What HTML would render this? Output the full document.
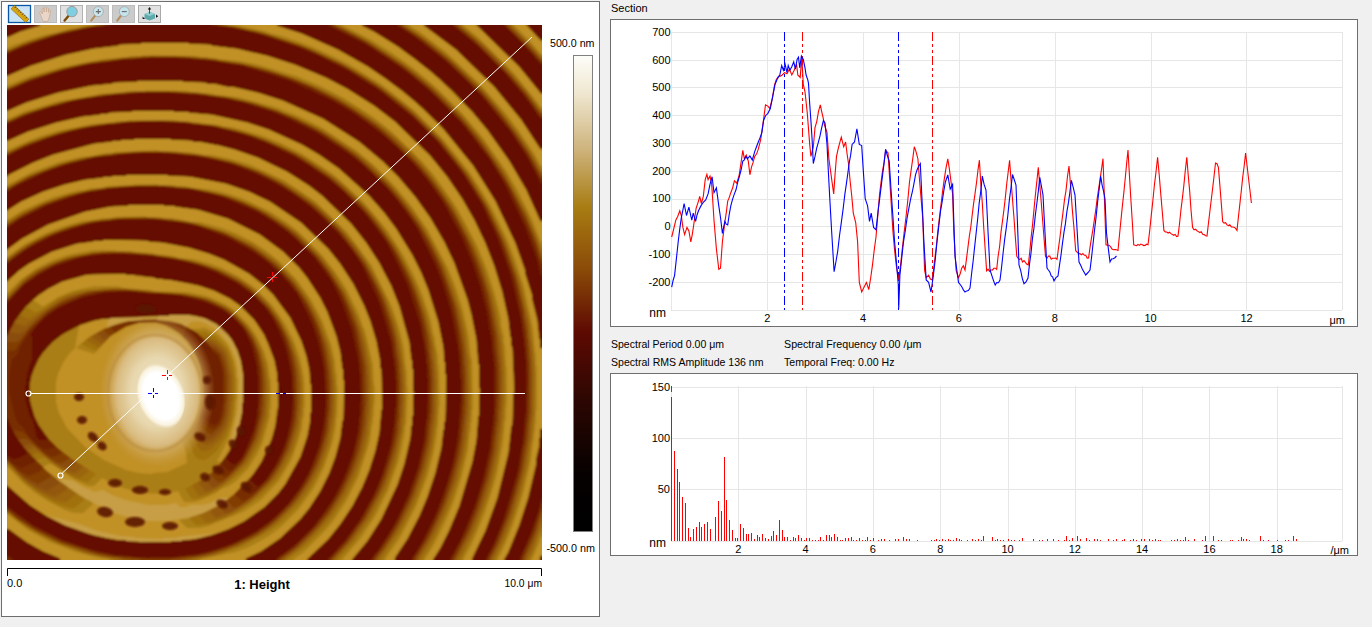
<!DOCTYPE html>
<html><head><meta charset="utf-8"><style>
html,body{margin:0;padding:0;}
body{width:1372px;height:627px;background:#f0f0f0;position:relative;overflow:hidden;font-family:"Liberation Sans", sans-serif;}
svg{position:absolute;left:0;top:0;}
text{font-family:"Liberation Sans", sans-serif;font-size:11px;fill:#000;}
</style></head><body>
<svg width="1372" height="627" viewBox="0 0 1372 627">
<!-- left panel -->
<rect x="1.5" y="1.5" width="598" height="615" fill="#fff" stroke="#6e6e6e" stroke-width="1"/>
<!-- toolbar -->
<g>
<rect x="8.5" y="5.5" width="22" height="17" fill="#cce3f6" stroke="#0a56a6" stroke-width="1.3"/>
<g transform="translate(20 14) rotate(43)">
<rect x="-10" y="-2.3" width="20" height="4.6" fill="#d9a512" stroke="#8a6200" stroke-width="0.6"/>
<path d="M-8 -2.3v1.6M-5.5 -2.3v1.2M-3 -2.3v1.6M-0.5 -2.3v1.2M2 -2.3v1.6M4.5 -2.3v1.2M7 -2.3v1.6" stroke="#3a2a00" stroke-width="0.8"/>
</g>
<rect x="34.5" y="5.5" width="22" height="17" fill="#cbcbcb" stroke="#b9b9b9"/>
<path d="M40 13.5 Q39 12 40.5 11.5 L42.5 14 L42 9 Q42.2 7.6 43.4 8 L44.2 12 L44.4 7.2 Q45 6.2 46 7 L46.4 12 L47 8 Q47.8 7.2 48.6 8 L48.4 12.6 L49.4 10.2 Q50.4 9.8 50.6 10.8 L49.6 16 Q48.8 19.5 47.6 21.5 L43.2 21.5 Q41.6 18.4 40 13.5Z" fill="#ead6c8" stroke="#c9a88e" stroke-width="0.7"/>
<rect x="60.5" y="5.5" width="22" height="17" fill="#e1e1e1" stroke="#b2b2b2"/>
<path d="M68.6 15.8 L64.6 20.6" stroke="#7a4a08" stroke-width="2.4" stroke-linecap="round"/>
<circle cx="72" cy="11.6" r="5.2" fill="#7fcfe2" stroke="#9c9c9c" stroke-width="1"/>
<rect x="86.5" y="5.5" width="22" height="17" fill="#cbcbcb" stroke="#bdbdbd"/>
<path d="M95 15.8 L91.2 20.6" stroke="#b39163" stroke-width="2.2" stroke-linecap="round"/>
<circle cx="98.3" cy="11.6" r="5" fill="#c9e7ee" stroke="#a9a9a9" stroke-width="0.9"/>
<path d="M95.8 11.6h5M98.3 9.1v5" stroke="#6a6a6a" stroke-width="1.1"/>
<rect x="112.5" y="5.5" width="22" height="17" fill="#cbcbcb" stroke="#bdbdbd"/>
<path d="M121 15.8 L117.2 20.6" stroke="#b39163" stroke-width="2.2" stroke-linecap="round"/>
<circle cx="124.3" cy="11.6" r="5" fill="#c3e4ec" stroke="#a9a9a9" stroke-width="0.9"/>
<path d="M121.8 11.6h5" stroke="#6a6a6a" stroke-width="1.1"/>
<rect x="138.5" y="5.5" width="22" height="17" fill="#e1e1e1" stroke="#a9a9a9"/>
<path d="M144.5 14 L150 12 L155 14 L155 18.5 L149.5 20.5 L144.5 18.5Z" fill="#5fa9ab"/>
<path d="M144.5 14 L150 12 L155 14 L149.5 16Z" fill="#8fcfd0"/>
<path d="M149.5 13.5V8.5" stroke="#222" stroke-width="0.8"/>
<path d="M147.8 9.6 L149.5 7 L151.2 9.6Z" fill="#111"/>
<path d="M156 14.6 L158.2 16.2 L156 17.8Z" fill="#111"/>
<path d="M142.6 16.4 L142.6 19 L145 19Z" fill="#111"/>
</g>
<!-- AFM image -->
<svg x="7" y="25" width="535" height="535" viewBox="7 25 535 535" overflow="hidden">
<defs><filter id="afmblur" x="-2%" y="-2%" width="104%" height="104%"><feGaussianBlur stdDeviation="0.9"/></filter></defs><g filter="url(#afmblur)">
<rect x="5" y="23" width="539" height="539" fill="#5a0b00"/>
<path fill="#651100" fill-rule="evenodd" d="M4 22l0 540 540 0 0 -540z"/>
<path fill="#6f2002" fill-rule="evenodd" d="M4 555l0 7 9 0 0 -3 -6 -4zM544 499l-3 0 -2 10 -10 29 -9 20 0 4 19 0 1 -6 4 -1zM4 282l0 21 3 0 17 -18 14 -10 17 -9 24 -8 16 -3 16 -1 1 -1 14 0 1 1 13 0 1 1 16 1 31 6 27 10 20 10 17 12 11 11 9 12 10 21 5 15 5 25 0 13 1 1 -1 22 -5 24 -5 14 -7 14 -10 15 -7 6 -9 -8 12 -17 11 -25 6 -30 0 -24 -1 -1 -2 -18 -5 -16 -6 -13 -10 -15 -14 -14 -10 -7 -16 -8 -15 -5 -18 -4 -25 -3 -14 -3 -16 -1 -1 -1 -38 1 -25 7 -14 7 -15 11 -13 14 -8 12 -4 9 -4 1 0 82 4 1 0 2 8 15 12 16 -1 2 -11 5 -3 0 -6 -4 -3 0 0 30 3 0 23 20 17 11 18 9 29 10 25 5 7 0 1 1 43 1 1 -1 10 0 1 -1 12 -1 17 -4 17 -6 16 -8 20 -14 14 -14 7 -9 15 -27 7 -21 3 -16 0 -7 1 -1 0 -27 -1 -1 -1 -14 -3 -14 -5 -15 -11 -23 -17 -23 -9 -9 -15 -12 -25 -14 -15 -6 -20 -6 -26 -5 -14 -1 -1 -1 -44 -1 -1 1 -9 0 -1 1 -16 2 -25 8 -23 12 -10 7 -12 11zM31 334l5 -7 10 -10 11 -8 16 -8 12 -4 19 -4 26 -2 1 1 14 0 1 1 33 2 32 9 12 6 6 4 13 13 4 6 6 14 5 20 0 7 1 1 0 33 -1 1 0 6 -3 14 -10 25 -3 5 -6 6 -4 -2 -6 -6 9 -16 6 -19 1 -10 1 -1 0 -8 1 -1 0 -27 -3 -16 -7 -17 -5 -7 -12 -11 -13 -6 -15 -3 -18 0 -1 1 -30 1 -1 1 -26 0 -1 1 -7 0 -10 2 -13 4 -19 10 -14 12 -9 12 -5 10 -4 16 0 14 3 13 6 13 10 13 -1 2 -8 0 -3 -2 -4 -17 -3 -5 -4 -14 -1 -16 1 -1 1 -11 5 -15 0 -21zM4 250l0 14 3 0 8 -7 15 -10 22 -11 29 -10 22 -5 15 -1 1 -1 36 0 1 1 10 0 1 1 13 1 18 4 30 12 24 13 18 13 10 9 18 22 14 29 7 21 5 24 1 22 1 1 -1 25 -5 26 -9 25 -11 20 -13 17 -19 18 -16 11 -20 10 -17 6 -16 4 -19 2 -1 1 -32 1 -1 -1 -15 0 -1 -1 -15 -1 -27 -6 -28 -10 -27 -14 -26 -19 -3 0 0 22 5 1 18 13 16 9 17 7 1 4 184 0 1 -4 15 -7 19 -13 20 -19 9 -11 11 -17 9 -18 6 -16 5 -19 2 -17 1 -1 1 -39 -1 -1 0 -10 -1 -1 -2 -17 -4 -16 -9 -24 -7 -14 -13 -20 -8 -10 -16 -16 -23 -17 -32 -16 -30 -9 -23 -3 -1 -1 -10 0 -1 -1 -34 0 -1 1 -18 1 -25 5 -37 13 -26 14 -15 11zM4 211l0 17 3 0 15 -10 24 -12 28 -10 23 -6 22 -2 1 -1 16 0 1 -1 20 0 1 1 15 0 1 1 16 1 16 3 16 5 33 14 14 8 20 14 25 24 18 25 10 21 10 28 7 33 2 37 -1 1 0 14 -1 1 -1 14 -5 22 -7 20 -10 21 -12 19 -12 15 -16 16 -20 15 0 3 31 0 0 -3 21 -20 12 -15 12 -18 10 -19 7 -17 6 -19 4 -18 2 -23 1 -1 -1 -40 -1 -1 0 -6 -4 -21 -6 -20 -6 -15 -11 -22 -13 -20 -12 -15 -27 -26 -31 -21 -21 -10 -23 -8 -36 -7 -22 -1 -1 -1 -40 0 -1 1 -13 0 -1 1 -8 0 -1 1 -18 2 -21 5 -21 7 -22 10 -14 9zM4 177l0 15 3 0 9 -6 30 -14 23 -8 28 -7 21 -2 1 -1 11 0 1 -1 40 0 1 1 11 0 1 1 20 2 14 3 21 7 24 10 17 9 16 10 16 12 28 27 14 18 9 14 16 35 12 40 2 16 1 1 0 7 1 1 0 12 1 1 0 27 -1 1 -1 19 -1 1 -2 16 -9 31 -7 17 -14 26 -18 25 -15 16 0 3 24 0 0 -3 15 -18 14 -22 16 -34 7 -21 6 -26 1 -12 1 -1 0 -9 1 -1 0 -21 1 -1 -1 -1 0 -22 -1 -1 0 -8 -1 -1 -2 -18 -10 -36 -8 -20 -12 -23 -13 -20 -15 -19 -29 -28 -13 -10 -22 -14 -29 -14 -23 -8 -15 -4 -21 -4 -6 0 -1 -1 -21 -1 -1 -1 -35 0 -1 1 -12 0 -1 1 -8 0 -1 1 -18 2 -41 11 -20 8 -24 12 -2 2zM4 141l0 15 4 0 9 -5 29 -12 29 -9 19 -4 21 -2 1 -1 10 0 1 -1 52 0 1 1 10 0 1 1 20 2 18 4 19 6 23 9 24 12 15 9 21 15 13 11 17 17 11 13 15 21 20 41 13 40 5 25 1 15 1 1 0 13 1 1 -1 40 -1 1 -2 21 -6 26 -10 29 -14 29 -15 24 -8 10 0 3 23 0 1 -5 12 -18 12 -23 8 -19 8 -24 6 -25 2 -18 1 -1 0 -7 1 -1 1 -46 -1 -1 0 -11 -1 -1 -1 -15 -5 -25 -10 -32 -7 -17 -9 -18 -16 -26 -12 -16 -15 -17 -30 -27 -20 -14 -17 -10 -33 -15 -21 -7 -36 -8 -23 -2 -1 -1 -14 0 -1 -1 -40 0 -1 1 -23 1 -1 1 -7 0 -1 1 -18 2 -26 6 -28 9 -20 9zM4 111l0 13 3 0 23 -10 24 -8 3 0 15 -5 21 -4 13 -1 1 -1 19 -1 1 -1 19 0 1 -1 21 0 1 1 18 0 1 1 10 0 1 1 21 2 22 5 28 9 22 9 22 11 38 25 19 16 14 14 16 19 16 23 17 34 8 20 9 29 8 42 1 25 1 1 0 24 -1 1 -1 24 -1 1 -1 13 -4 20 -6 22 -12 32 -14 28 -9 14 0 4 21 0 0 -3 7 -11 9 -18 10 -24 13 -44 4 -21 2 -25 1 -1 0 -22 1 -1 -1 -5 0 -22 -1 -1 -2 -25 -5 -25 -4 -15 -13 -36 -10 -21 -14 -24 -15 -21 -17 -20 -15 -15 -24 -20 -36 -23 -40 -18 -25 -8 -26 -6 -5 0 -13 -3 -7 0 -1 -1 -23 -1 -1 -1 -44 0 -1 1 -24 1 -1 1 -21 2 -33 7 -32 10 -18 8zM4 76l0 15 4 0 20 -9 35 -12 32 -7 19 -2 1 -1 20 -1 1 -1 54 0 1 1 19 1 1 1 6 0 1 1 6 0 16 3 50 16 43 20 17 10 27 19 19 16 15 15 17 20 15 21 19 36 10 24 8 24 7 27 3 21 1 1 2 26 1 1 0 52 -1 1 0 10 -1 1 -2 21 -7 32 -8 26 -13 32 -12 22 0 3 22 0 0 -4 13 -27 12 -33 11 -45 3 -27 1 -1 1 -32 1 -1 -2 -45 -1 -1 0 -8 -1 -1 -2 -18 -6 -27 -8 -26 -9 -23 -11 -23 -12 -21 -15 -22 -17 -21 -35 -34 -21 -16 -27 -17 -21 -11 -31 -13 -28 -9 -30 -7 -25 -3 -1 -1 -22 -1 -1 -1 -46 0 -1 1 -22 1 -1 1 -25 3 -27 6 -35 11 -23 10zM503 22l0 3 18 17 19 22 4 1 0 -24 -3 0 -15 -16 0 -3zM452 22l0 3 19 15 31 30 27 32 11 16 4 1 0 -25 -3 0 -22 -27 -43 -42 0 -3zM396 22l0 3 16 10 29 22 16 14 22 22 31 38 19 29 12 24 3 0 0 -34 -4 -1 -19 -29 -27 -33 -38 -37 -32 -24 -1 -4zM327 22l0 3 38 19 31 20 16 12 19 16 34 35 23 30 14 22 23 48 12 33 4 16 3 0 0 -54 -4 -1 -14 -31 -17 -29 -13 -19 -18 -23 -19 -21 -28 -26 -33 -25 -24 -15 -12 -6 -1 -4zM211 22l0 3 13 1 25 5 46 15 24 10 26 13 31 19 30 23 30 29 25 31 20 32 16 34 13 36 11 46 2 19 1 1 0 8 1 1 0 11 1 1 0 53 -1 1 -2 28 -6 32 -14 47 -8 20 -9 18 0 3 18 0 0 -3 4 -7 11 -27 9 -28 8 -34 0 -5 3 -13 0 -7 1 -1 0 -8 4 -1 0 -79 -4 -1 0 -8 -1 -1 -2 -19 -5 -20 0 -4 -7 -22 0 -3 -10 -28 -20 -42 -22 -35 -30 -37 -20 -20 -21 -18 -34 -24 -30 -17 -36 -16 -25 -8 -1 -4zM4 54l6 -1 5 -3 35 -13 42 -10 19 -2 0 -3 -70 0 -1 4 -20 6 -11 5 -5 0z"/>
<path fill="#782f04" fill-rule="evenodd" d="M4 557l0 5 6 0 0 -3 -3 -2zM544 504l-3 0 0 3 -8 24 -11 25 -1 6 18 0 1 -6 4 -1zM4 282l0 20 3 0 17 -18 14 -10 17 -9 27 -9 20 -2 1 -1 29 0 1 1 26 2 35 7 18 6 25 13 15 11 13 13 9 12 9 17 5 14 5 24 1 36 -1 1 0 8 -2 10 -6 20 -8 17 -10 15 -12 12 -5 2 -8 -8 11 -12 8 -12 6 -12 7 -20 3 -15 0 -7 1 -1 0 -24 -1 -1 0 -7 -3 -15 -6 -17 -14 -23 -18 -17 -22 -12 -23 -7 -21 -3 -1 -1 -6 0 -1 -1 -6 0 -1 -1 -20 -2 -1 -1 -8 0 -1 -1 -30 0 -25 5 -22 10 -9 6 -14 13 -10 13 -7 14 -4 1 0 82 4 1 4 10 8 13 16 18 -1 2 -14 6 -11 -6 -3 -4 -3 0 0 27 3 0 23 20 17 11 18 9 29 10 25 5 7 0 1 1 43 1 1 -1 10 0 1 -1 12 -1 17 -4 17 -6 16 -8 20 -14 14 -14 7 -9 15 -27 7 -21 3 -16 0 -7 1 -1 0 -27 -1 -1 -1 -14 -3 -14 -5 -15 -11 -23 -17 -23 -9 -9 -15 -12 -25 -14 -15 -6 -20 -6 -26 -5 -14 -1 -1 -1 -44 -1 -1 1 -9 0 -1 1 -16 2 -25 8 -23 12 -10 7 -12 11zM188 327l9 5 12 12 5 9 4 3 3 9 2 10 0 28 -3 16 -4 6 -2 0 -16 -9 4 -17 0 -20 -5 -20 -5 -10 -9 -11 0 -2zM12 360l5 -5 6 -13 6 -9 16 -17 13 -9 25 -11 23 -5 30 0 1 1 37 2 1 1 7 0 19 4 22 10 11 8 10 11 9 16 4 12 1 10 1 1 0 9 1 1 0 26 -1 1 0 8 -4 19 -4 11 -8 16 -12 13 -2 0 -9 -8 9 -12 9 -21 4 -19 0 -8 1 -1 0 -27 -3 -16 -3 -9 -6 -11 -11 -12 -17 -9 -15 -3 -18 0 -1 1 -10 0 -1 1 -54 2 -14 3 -16 6 -9 5 -12 9 -14 17 -5 10 -4 16 0 14 5 18 10 17 11 12 -7 3 -5 0 -6 -3 -8 -8 -7 -11 -5 -4 -3 -7 -6 -24 0 -17zM4 250l0 13 3 0 17 -13 28 -15 25 -9 17 -4 21 -2 1 -1 43 0 1 1 16 1 24 5 26 9 24 13 18 13 20 19 10 13 14 25 8 22 4 18 1 12 1 1 0 9 1 1 0 30 -1 1 -1 15 -5 21 -11 27 -7 12 -11 15 -19 19 -15 11 -23 12 -27 9 -15 3 -6 0 -1 1 -8 0 -1 1 -42 0 -1 -1 -9 0 -1 -1 -6 0 -21 -4 -34 -11 -28 -14 -27 -19 -3 0 0 20 5 1 18 13 16 9 17 7 1 4 184 0 1 -4 15 -7 19 -13 20 -19 9 -11 11 -17 9 -18 6 -16 5 -19 2 -17 1 -1 1 -39 -1 -1 0 -10 -1 -1 -2 -17 -4 -16 -9 -24 -7 -14 -13 -20 -8 -10 -16 -16 -23 -17 -32 -16 -30 -9 -23 -3 -1 -1 -10 0 -1 -1 -34 0 -1 1 -18 1 -25 5 -37 13 -26 14 -15 11zM4 211l0 16 3 0 13 -9 23 -12 27 -10 20 -5 5 0 13 -3 8 0 1 -1 13 0 1 -1 32 0 1 1 12 0 1 1 15 1 34 8 16 6 16 8 22 14 13 10 24 24 10 13 10 16 8 16 9 25 5 22 2 22 1 1 0 39 -1 1 -1 15 -6 26 -9 24 -11 21 -18 25 -22 22 -17 12 0 3 30 0 0 -3 21 -20 12 -15 12 -18 10 -19 7 -17 6 -19 4 -18 2 -23 1 -1 -1 -40 -1 -1 0 -6 -4 -21 -6 -20 -6 -15 -11 -22 -13 -20 -12 -15 -27 -26 -31 -21 -21 -10 -23 -8 -36 -7 -22 -1 -1 -1 -40 0 -1 1 -13 0 -1 1 -8 0 -1 1 -18 2 -21 5 -21 7 -22 10 -14 9zM4 177l0 14 3 0 7 -5 31 -15 24 -8 26 -6 20 -2 1 -1 9 0 1 -1 49 0 1 1 18 1 37 8 25 9 30 16 24 17 25 23 19 23 11 17 11 21 12 33 5 21 2 18 1 1 0 9 1 1 0 42 -1 1 0 8 -1 1 0 6 -3 16 -9 30 -9 21 -13 23 -16 22 -16 17 0 3 23 0 0 -3 15 -18 14 -22 16 -34 7 -21 6 -26 1 -12 1 -1 0 -9 1 -1 0 -21 1 -1 -1 -1 0 -22 -1 -1 0 -8 -1 -1 -2 -18 -10 -36 -8 -20 -12 -23 -13 -20 -15 -19 -29 -28 -13 -10 -22 -14 -29 -14 -23 -8 -15 -4 -21 -4 -6 0 -1 -1 -21 -1 -1 -1 -35 0 -1 1 -12 0 -1 1 -8 0 -1 1 -18 2 -41 11 -20 8 -24 12 -2 2zM4 141l0 14 4 0 17 -9 30 -11 27 -7 23 -3 1 -1 17 -1 1 -1 17 0 1 -1 22 0 1 1 27 1 1 1 7 0 1 1 17 2 5 2 12 2 25 8 19 8 22 12 29 20 13 11 21 21 23 30 9 15 13 27 8 22 5 19 4 26 1 1 1 18 1 1 0 43 -1 1 -2 24 -6 27 -11 32 -13 27 -15 24 -8 10 0 4 21 0 1 -5 12 -18 12 -23 8 -19 8 -24 6 -25 2 -18 1 -1 0 -7 1 -1 1 -46 -1 -1 0 -11 -1 -1 -1 -15 -5 -25 -10 -32 -7 -17 -9 -18 -16 -26 -12 -16 -15 -17 -30 -27 -20 -14 -17 -10 -33 -15 -21 -7 -36 -8 -23 -2 -1 -1 -14 0 -1 -1 -40 0 -1 1 -23 1 -1 1 -7 0 -1 1 -18 2 -26 6 -28 9 -20 9zM4 111l0 12 3 0 20 -9 28 -9 25 -6 24 -3 1 -1 7 0 1 -1 25 -1 1 -1 36 0 1 1 24 1 1 1 7 0 1 1 23 3 24 6 21 7 43 21 23 15 18 14 29 28 17 21 12 18 20 39 11 31 8 35 2 21 1 1 1 57 -1 1 -2 25 -5 25 -10 33 -9 22 -11 22 -11 18 0 3 20 0 0 -3 7 -11 9 -18 10 -24 13 -44 4 -21 2 -25 1 -1 0 -22 1 -1 -1 -5 0 -22 -1 -1 -2 -25 -5 -25 -4 -15 -13 -36 -10 -21 -14 -24 -15 -21 -17 -20 -15 -15 -24 -20 -36 -23 -40 -18 -25 -8 -26 -6 -5 0 -13 -3 -7 0 -1 -1 -23 -1 -1 -1 -44 0 -1 1 -24 1 -1 1 -21 2 -33 7 -32 10 -18 8zM4 76l0 14 3 0 26 -11 25 -8 35 -8 27 -3 1 -1 27 -1 1 -1 28 0 1 1 27 1 1 1 7 0 1 1 6 0 1 1 21 3 27 7 36 13 38 20 17 11 25 19 32 31 11 13 19 27 18 33 10 24 7 21 6 24 4 21 0 6 1 1 1 16 1 1 0 13 1 1 0 40 -1 1 0 12 -1 1 0 9 -1 1 -2 19 -7 31 -9 28 -14 33 -9 16 0 4 20 0 0 -4 13 -27 12 -33 11 -45 3 -27 1 -1 1 -32 1 -1 -2 -45 -1 -1 0 -8 -1 -1 -2 -18 -6 -27 -8 -26 -9 -23 -11 -23 -12 -21 -15 -22 -17 -21 -35 -34 -21 -16 -27 -17 -21 -11 -31 -13 -28 -9 -30 -7 -25 -3 -1 -1 -22 -1 -1 -1 -46 0 -1 1 -22 1 -1 1 -25 3 -27 6 -35 11 -23 10zM505 22l0 3 22 22 14 16 3 0 0 -22 -3 0 -15 -16 0 -3zM454 22l0 3 25 21 26 26 19 22 17 24 3 0 0 -24 -3 0 -22 -27 -43 -42 0 -3zM398 22l0 3 16 10 32 25 37 36 29 36 14 21 15 27 3 0 0 -30 -4 -1 -19 -29 -27 -33 -38 -37 -32 -24 -1 -4zM331 22l0 3 35 18 40 27 23 19 33 33 28 36 18 29 21 44 11 31 1 6 3 0 0 -46 -4 -1 -14 -31 -17 -29 -22 -31 -15 -18 -20 -21 -21 -19 -33 -25 -24 -15 -12 -6 -1 -4zM213 22l0 3 13 1 40 9 43 15 35 17 35 22 35 28 24 24 29 37 17 28 15 31 15 43 10 48 2 25 1 1 0 16 1 1 -1 47 -1 1 -2 25 -1 1 -4 26 -14 48 -11 27 -7 13 0 3 17 0 0 -3 4 -7 11 -27 9 -28 8 -34 0 -5 3 -13 0 -7 1 -1 0 -8 4 -1 0 -79 -4 -1 0 -8 -1 -1 -2 -19 -5 -20 0 -4 -7 -22 0 -3 -10 -28 -20 -42 -22 -35 -30 -37 -20 -20 -21 -18 -34 -24 -30 -17 -36 -16 -25 -8 -1 -4zM4 53l3 0 5 -3 18 -6 3 -2 30 -9 33 -7 13 -1 0 -3 -68 0 -1 4 -20 6 -11 5 -5 0z"/>
<path fill="#823e06" fill-rule="evenodd" d="M544 509l-3 0 -7 23 -12 27 0 3 17 0 1 -6 4 -1zM4 282l0 18 3 0 17 -17 19 -13 17 -8 12 -4 19 -4 7 0 1 -1 47 1 1 1 7 0 1 1 18 2 29 7 16 6 19 10 14 10 17 17 12 18 6 13 5 15 3 15 0 6 1 1 0 13 1 1 -1 24 -4 20 -5 15 -6 13 -11 17 -16 16 -8 6 -3 0 -8 -7 16 -16 11 -16 11 -25 6 -30 0 -24 -1 -1 0 -7 -3 -15 -6 -17 -14 -23 -14 -14 -10 -7 -16 -8 -15 -5 -18 -4 -25 -3 -14 -3 -16 -1 -1 -1 -38 1 -25 7 -23 13 -14 13 -10 13 -7 14 -4 1 0 15 11 -1 15 -21 18 -17 11 -7 23 -10 19 -4 25 -1 1 1 14 0 1 1 35 2 26 5 20 9 11 8 12 13 7 12 5 14 3 15 1 27 -1 1 -1 18 -6 22 -8 17 -7 10 -13 12 -2 0 -8 -9 10 -12 8 -15 6 -19 1 -10 1 -1 0 -8 1 -1 0 -27 -1 -1 -1 -11 -4 -13 -9 -15 -12 -11 -13 -6 -15 -3 -18 0 -1 1 -30 1 -1 1 -26 0 -1 1 -7 0 -10 2 -13 4 -16 8 -17 14 -9 12 -5 10 -4 16 0 14 5 18 10 17 18 18 -4 3 -7 2 -8 -4 -21 -21 -10 -2 3 6 11 15 17 17 -5 4 -10 4 -12 -6 -10 -11 -3 0 0 26 3 0 23 20 17 11 18 9 29 10 25 5 7 0 1 1 43 1 1 -1 10 0 1 -1 12 -1 17 -4 17 -6 16 -8 20 -14 14 -14 7 -9 15 -27 7 -21 3 -16 0 -7 1 -1 0 -27 -1 -1 -1 -14 -3 -14 -5 -15 -11 -23 -17 -23 -9 -9 -15 -12 -25 -14 -15 -6 -20 -6 -26 -5 -14 -1 -1 -1 -44 -1 -1 1 -9 0 -1 1 -16 2 -25 8 -23 12 -10 7 -12 11zM113 325l20 -5 24 -1 1 1 8 0 13 3 18 9 12 12 2 4 8 6 5 15 1 33 -1 1 0 7 -2 9 -3 6 -6 5 -16 -11 5 -20 0 -20 -1 -1 -1 -10 -8 -19 -5 -7 -8 -8 -13 -8 -10 -3 -21 1 -9 3 -10 6 -5 -5zM4 250l0 12 3 0 22 -16 17 -9 17 -7 29 -8 19 -2 1 -1 12 0 1 -1 24 0 1 1 13 0 1 1 14 1 27 6 20 7 15 7 21 13 10 8 21 21 15 22 7 14 6 16 7 31 1 23 1 1 -1 26 -1 1 0 7 -3 15 -8 24 -12 23 -15 20 -12 12 -20 15 -21 11 -26 9 -20 4 -16 1 -1 1 -35 0 -1 -1 -19 -1 -21 -4 -35 -11 -27 -13 -16 -10 -12 -10 -3 0 0 19 5 1 18 13 16 9 17 7 1 4 184 0 1 -4 15 -7 19 -13 20 -19 9 -11 11 -17 9 -18 6 -16 5 -19 2 -17 1 -1 1 -39 -1 -1 0 -10 -1 -1 -2 -17 -4 -16 -9 -24 -7 -14 -13 -20 -8 -10 -16 -16 -23 -17 -32 -16 -30 -9 -23 -3 -1 -1 -10 0 -1 -1 -34 0 -1 1 -18 1 -25 5 -37 13 -26 14 -15 11zM4 211l0 15 3 0 13 -9 26 -13 38 -12 21 -3 1 -1 19 -1 1 -1 41 0 1 1 19 1 37 8 32 13 14 8 17 12 27 25 13 16 12 19 8 16 9 25 7 36 1 44 -1 1 0 9 -1 1 -1 12 -6 24 -8 21 -8 16 -10 16 -16 20 -20 19 -14 10 0 3 28 0 0 -3 21 -20 12 -15 12 -18 10 -19 7 -17 6 -19 4 -18 2 -23 1 -1 -1 -40 -1 -1 0 -6 -4 -21 -6 -20 -6 -15 -11 -22 -13 -20 -12 -15 -27 -26 -31 -21 -21 -10 -23 -8 -36 -7 -22 -1 -1 -1 -40 0 -1 1 -13 0 -1 1 -8 0 -1 1 -18 2 -21 5 -21 7 -22 10 -14 9zM4 177l0 13 3 0 11 -7 26 -12 17 -6 32 -8 19 -2 1 -1 9 0 1 -1 14 0 1 -1 26 0 1 1 14 0 1 1 16 1 1 1 16 2 23 6 19 7 19 9 17 10 18 13 13 11 18 18 24 32 12 22 8 19 10 35 2 17 1 1 0 7 1 1 0 13 1 1 0 26 -1 1 0 11 -1 1 -1 14 -6 26 -11 30 -16 30 -15 21 -17 19 0 3 21 0 0 -3 15 -18 14 -22 16 -34 7 -21 6 -26 1 -12 1 -1 0 -9 1 -1 0 -21 1 -1 -1 -1 0 -22 -1 -1 0 -8 -1 -1 -2 -18 -10 -36 -8 -20 -12 -23 -13 -20 -15 -19 -29 -28 -13 -10 -22 -14 -29 -14 -23 -8 -15 -4 -21 -4 -6 0 -1 -1 -21 -1 -1 -1 -35 0 -1 1 -12 0 -1 1 -8 0 -1 1 -18 2 -41 11 -20 8 -24 12 -2 2zM4 141l0 13 4 0 16 -8 33 -12 24 -6 16 -3 6 0 1 -1 16 -1 1 -1 14 0 1 -1 34 0 1 1 14 0 1 1 8 0 1 1 19 2 26 6 21 7 33 15 35 23 12 10 26 26 13 16 12 18 18 35 9 25 6 23 3 23 1 1 0 8 1 1 0 13 1 1 -1 42 -1 1 -2 20 -7 30 -8 23 -12 26 -11 19 -15 21 0 3 20 0 1 -5 12 -18 12 -23 8 -19 8 -24 6 -25 2 -18 1 -1 0 -7 1 -1 1 -46 -1 -1 0 -11 -1 -1 -1 -15 -5 -25 -10 -32 -7 -17 -9 -18 -16 -26 -12 -16 -15 -17 -30 -27 -20 -14 -17 -10 -33 -15 -21 -7 -36 -8 -23 -2 -1 -1 -14 0 -1 -1 -40 0 -1 1 -23 1 -1 1 -7 0 -1 1 -18 2 -26 6 -28 9 -20 9zM4 111l0 11 4 0 18 -8 21 -7 27 -7 21 -3 1 -1 6 0 1 -1 30 -2 1 -1 46 0 1 1 30 2 1 1 26 4 40 12 17 7 27 14 20 13 17 13 34 33 23 30 12 20 9 18 9 22 7 22 5 21 3 24 1 1 1 24 1 1 0 30 -1 1 0 13 -1 1 -1 16 -5 26 -12 39 -8 19 -10 20 -12 19 0 3 19 0 0 -3 7 -11 9 -18 10 -24 13 -44 4 -21 2 -25 1 -1 0 -22 1 -1 -1 -5 0 -22 -1 -1 -2 -25 -5 -25 -4 -15 -13 -36 -10 -21 -14 -24 -15 -21 -17 -20 -15 -15 -24 -20 -36 -23 -40 -18 -25 -8 -26 -6 -5 0 -13 -3 -7 0 -1 -1 -23 -1 -1 -1 -44 0 -1 1 -24 1 -1 1 -21 2 -33 7 -32 10 -18 8zM4 76l0 13 5 0 20 -9 35 -11 27 -6 18 -2 1 -1 7 0 1 -1 23 -1 1 -1 42 0 1 1 13 0 1 1 17 1 1 1 27 4 42 12 27 11 20 10 17 10 27 19 36 33 14 16 15 20 12 19 13 25 16 42 7 27 3 21 1 1 2 25 1 1 1 40 -1 1 -1 28 -1 1 0 7 -1 1 -2 18 -6 26 -11 34 -7 17 -15 29 0 3 19 0 0 -4 13 -27 12 -33 11 -45 3 -27 1 -1 1 -32 1 -1 -2 -45 -1 -1 0 -8 -1 -1 -2 -18 -6 -27 -8 -26 -9 -23 -11 -23 -12 -21 -15 -22 -17 -21 -35 -34 -21 -16 -27 -17 -21 -11 -31 -13 -28 -9 -30 -7 -25 -3 -1 -1 -22 -1 -1 -1 -46 0 -1 1 -22 1 -1 1 -25 3 -27 6 -35 11 -23 10zM506 22l0 3 26 26 8 10 4 1 0 -21 -3 0 -15 -16 0 -3zM455 22l0 3 21 17 33 33 17 20 15 21 3 0 0 -22 -3 0 -22 -27 -43 -42 0 -3zM400 22l0 3 24 16 28 23 34 34 28 35 14 21 13 24 3 0 0 -28 -4 -1 -19 -29 -27 -33 -38 -37 -32 -24 -1 -4zM332 22l0 3 34 17 39 26 33 28 27 28 27 35 19 31 16 33 9 23 5 17 3 0 0 -41 -4 -1 -14 -31 -17 -29 -22 -31 -15 -18 -20 -21 -21 -19 -33 -25 -24 -15 -12 -6 -1 -4zM216 22l0 3 17 2 27 6 35 11 20 8 34 17 33 21 31 25 26 26 22 27 23 36 17 35 14 40 8 34 2 18 1 1 0 7 1 1 1 22 1 1 -1 59 -1 1 -1 16 -1 1 0 6 -1 1 -3 21 -6 24 -8 25 -10 25 -8 16 0 4 15 0 0 -3 4 -7 11 -27 9 -28 8 -34 0 -5 3 -13 0 -7 1 -1 0 -8 4 -1 0 -79 -4 -1 0 -8 -1 -1 -2 -19 -5 -20 0 -4 -7 -22 0 -3 -10 -28 -20 -42 -22 -35 -30 -37 -20 -20 -21 -18 -34 -24 -30 -17 -36 -16 -25 -8 -1 -4zM4 52l4 0 21 -9 29 -9 36 -8 12 -1 0 -3 -65 0 -1 4 -20 6 -11 5 -5 0z"/>
<path fill="#8b4d08" fill-rule="evenodd" d="M544 513l-3 0 -6 20 -11 25 0 4 15 0 1 -6 4 -1zM4 510l0 18 5 1 18 13 16 9 17 7 1 4 80 0 0 -3 -21 -1 -1 -1 -6 0 -15 -3 -36 -11 -27 -13 -17 -11 -11 -9zM4 282l0 18 3 0 17 -18 16 -11 16 -8 11 -4 29 -6 11 0 1 -1 31 1 1 1 8 0 1 1 7 0 1 1 18 2 25 6 17 6 23 12 11 8 18 18 9 13 8 15 6 17 4 19 1 38 -1 1 0 7 -2 10 -7 22 -8 16 -11 16 -17 16 -12 8 -5 2 -8 -8 7 -5 17 -17 11 -16 11 -25 6 -30 0 -24 -1 -1 0 -7 -3 -15 -6 -17 -14 -23 -14 -14 -10 -7 -16 -8 -15 -5 -18 -4 -25 -3 -14 -3 -16 -1 -1 -1 -38 1 -25 7 -23 13 -14 13 -10 13 -7 14 -4 1 0 6 12 0 4 -2 10 -13 19 -17 15 -9 22 -8 10 -2 7 0 1 -1 29 0 1 1 46 3 21 4 14 5 14 8 14 13 10 15 6 15 4 21 0 31 -1 1 0 6 -7 26 -9 18 -4 6 -14 14 -7 5 -3 0 -6 -6 -1 -3 15 -17 8 -15 6 -19 1 -10 1 -1 0 -8 1 -1 0 -27 -1 -1 -1 -11 -4 -13 -9 -15 -12 -11 -13 -6 -15 -3 -18 0 -1 1 -30 1 -1 1 -26 0 -1 1 -7 0 -10 2 -13 4 -16 8 -17 14 -9 12 -5 10 -4 16 1 20 8 20 10 14 9 9 11 8 1 2 -8 5 -3 0 -10 -5 -22 -19 -9 0 9 12 25 24 -3 3 -11 6 -14 -7 -17 -17 -3 0 0 25 3 0 23 20 17 11 18 9 29 10 25 5 7 0 1 1 43 1 1 -1 10 0 1 -1 12 -1 17 -4 17 -6 16 -8 20 -14 14 -14 7 -9 15 -27 7 -21 3 -16 0 -7 1 -1 0 -27 -1 -1 -1 -14 -3 -14 -5 -15 -11 -23 -17 -23 -9 -9 -15 -12 -25 -14 -15 -6 -20 -6 -26 -5 -14 -1 -1 -1 -44 -1 -1 1 -9 0 -1 1 -16 2 -25 8 -23 12 -10 7 -12 11zM103 330l7 -4 17 -5 15 -1 1 -1 14 0 1 1 8 0 13 3 18 9 13 14 6 3 5 5 3 7 3 15 0 26 -1 1 -1 12 -4 11 -10 9 -16 -13 5 -12 1 -10 1 -1 -1 -26 -4 -14 -5 -10 -5 -7 -8 -8 -13 -8 -10 -3 -21 1 -15 6 -8 6 -2 0zM4 250l0 11 3 0 28 -19 19 -9 17 -6 15 -4 16 -3 6 0 1 -1 46 -1 1 1 10 0 1 1 7 0 1 1 16 2 33 10 31 16 22 17 17 18 13 19 12 25 7 24 2 17 1 1 0 9 1 1 0 31 -1 1 -2 20 -8 27 -10 21 -12 18 -22 23 -9 7 -14 9 -29 13 -28 7 -13 1 -1 1 -11 0 0 3 75 0 1 -4 15 -7 19 -13 20 -19 9 -11 11 -17 9 -18 6 -16 5 -19 2 -17 1 -1 1 -39 -1 -1 0 -10 -1 -1 -2 -17 -4 -16 -9 -24 -7 -14 -13 -20 -8 -10 -16 -16 -23 -17 -32 -16 -30 -9 -23 -3 -1 -1 -10 0 -1 -1 -34 0 -1 1 -18 1 -25 5 -37 13 -26 14 -15 11zM4 211l0 14 3 0 19 -12 19 -9 19 -7 23 -6 16 -2 1 -1 7 0 1 -1 9 0 1 -1 49 0 1 1 17 1 33 7 20 7 17 8 28 18 11 9 18 18 12 15 15 24 14 34 8 40 1 38 -1 1 -1 18 -5 24 -8 23 -10 21 -12 19 -11 14 -20 20 -18 13 0 3 27 0 0 -3 21 -20 12 -15 12 -18 10 -19 7 -17 6 -19 4 -18 2 -23 1 -1 -1 -40 -1 -1 0 -6 -4 -21 -6 -20 -6 -15 -11 -22 -13 -20 -12 -15 -27 -26 -31 -21 -21 -10 -23 -8 -36 -7 -22 -1 -1 -1 -40 0 -1 1 -13 0 -1 1 -8 0 -1 1 -18 2 -21 5 -21 7 -22 10 -14 9zM4 177l0 12 3 0 22 -12 22 -9 19 -6 27 -6 21 -2 1 -1 12 0 1 -1 38 0 1 1 12 0 1 1 14 1 36 8 22 8 21 10 32 21 12 10 21 21 23 31 17 33 9 25 4 16 3 23 1 1 0 10 1 1 -1 49 -1 1 0 6 -3 16 -10 33 -6 14 -14 26 -19 26 -14 15 0 3 20 0 0 -3 15 -18 14 -22 16 -34 7 -21 6 -26 1 -12 1 -1 0 -9 1 -1 0 -21 1 -1 -1 -1 0 -22 -1 -1 0 -8 -1 -1 -2 -18 -10 -36 -8 -20 -12 -23 -13 -20 -15 -19 -29 -28 -13 -10 -22 -14 -29 -14 -23 -8 -15 -4 -21 -4 -6 0 -1 -1 -21 -1 -1 -1 -35 0 -1 1 -12 0 -1 1 -8 0 -1 1 -18 2 -41 11 -20 8 -24 12 -2 2zM4 141l0 13 3 0 16 -8 33 -12 39 -9 23 -2 1 -1 11 0 1 -1 44 0 1 1 11 0 1 1 22 2 44 11 3 2 13 4 25 12 35 23 29 26 15 17 14 19 11 18 10 20 7 17 7 22 5 22 2 20 1 1 0 9 1 1 0 44 -1 1 0 9 -1 1 -2 19 -6 25 -9 26 -16 33 -14 22 -8 10 0 3 19 0 1 -5 12 -18 12 -23 8 -19 8 -24 6 -25 2 -18 1 -1 0 -7 1 -1 1 -46 -1 -1 0 -11 -1 -1 -1 -15 -5 -25 -10 -32 -7 -17 -9 -18 -16 -26 -12 -16 -15 -17 -30 -27 -20 -14 -17 -10 -33 -15 -21 -7 -36 -8 -23 -2 -1 -1 -14 0 -1 -1 -40 0 -1 1 -23 1 -1 1 -7 0 -1 1 -18 2 -26 6 -28 9 -20 9zM4 111l0 11 3 0 18 -8 24 -8 7 -1 12 -4 26 -5 14 -1 1 -1 20 -1 1 -1 54 0 1 1 11 0 1 1 8 0 1 1 19 2 15 4 4 0 30 9 22 9 20 10 38 25 32 29 18 21 15 21 9 15 13 26 14 40 8 40 1 19 1 1 0 48 -1 1 0 9 -1 1 0 7 -1 1 0 6 -3 16 -7 27 -9 25 -14 30 -13 21 0 4 17 0 0 -3 7 -11 9 -18 10 -24 13 -44 4 -21 2 -25 1 -1 0 -22 1 -1 -1 -5 0 -22 -1 -1 -2 -25 -5 -25 -4 -15 -13 -36 -10 -21 -14 -24 -15 -21 -17 -20 -15 -15 -24 -20 -36 -23 -40 -18 -25 -8 -26 -6 -5 0 -13 -3 -7 0 -1 -1 -23 -1 -1 -1 -44 0 -1 1 -24 1 -1 1 -21 2 -33 7 -32 10 -18 8zM4 76l0 13 4 0 20 -9 31 -10 25 -6 30 -4 1 -1 8 0 1 -1 11 0 1 -1 54 0 1 1 20 1 1 1 6 0 1 1 6 0 6 2 10 1 21 5 28 9 22 9 24 12 20 12 21 15 18 15 23 23 15 18 16 23 9 15 13 26 7 17 10 31 8 40 2 28 1 1 0 46 -1 1 0 12 -1 1 -3 27 -6 27 -9 29 -11 27 -12 24 -2 2 0 3 18 0 0 -4 13 -27 12 -33 11 -45 3 -27 1 -1 1 -32 1 -1 -2 -45 -1 -1 0 -8 -1 -1 -2 -18 -6 -27 -8 -26 -9 -23 -11 -23 -12 -21 -15 -22 -17 -21 -35 -34 -21 -16 -27 -17 -21 -11 -31 -13 -28 -9 -30 -7 -25 -3 -1 -1 -22 -1 -1 -1 -46 0 -1 1 -22 1 -1 1 -25 3 -27 6 -35 11 -23 10zM507 22l0 3 34 35 3 0 0 -19 -3 0 -15 -16 0 -3zM457 22l0 3 19 16 35 35 16 19 14 19 3 0 0 -20 -3 0 -22 -27 -43 -42 0 -3zM401 22l0 3 20 13 23 18 33 31 26 30 26 37 12 22 3 0 0 -26 -4 -1 -19 -29 -27 -33 -38 -37 -32 -24 -1 -4zM333 22l0 3 27 13 38 24 28 22 32 31 25 30 25 38 18 35 11 27 4 14 3 0 0 -37 -4 -1 -14 -31 -17 -29 -22 -31 -15 -18 -20 -21 -21 -19 -33 -25 -24 -15 -12 -6 -1 -4zM218 22l0 3 17 2 30 7 44 15 32 15 21 12 21 14 31 25 26 26 24 30 22 35 16 33 13 36 9 37 0 5 3 13 0 7 1 1 0 8 1 1 0 11 1 1 0 55 -1 1 -2 27 -6 32 -12 41 -12 30 -7 13 0 4 14 0 0 -3 4 -7 11 -27 9 -28 8 -34 0 -5 3 -13 0 -7 1 -1 0 -8 4 -1 0 -79 -4 -1 0 -8 -1 -1 -2 -19 -5 -20 0 -4 -7 -22 0 -3 -10 -28 -20 -42 -22 -35 -30 -37 -20 -20 -21 -18 -34 -24 -30 -17 -36 -16 -25 -8 -1 -4zM4 52l3 0 18 -8 39 -12 28 -6 12 -1 0 -3 -63 0 -1 4 -20 6 -11 5 -5 0z"/>
<path fill="#93590b" fill-rule="evenodd" d="M544 518l-3 0 -7 21 -8 17 -1 6 14 0 1 -6 4 -1zM4 511l0 17 5 1 18 13 16 9 17 7 1 4 69 0 0 -3 -8 0 -1 -1 -6 0 -21 -4 -34 -11 -19 -9 -24 -15 -8 -7zM4 282l0 17 3 0 21 -21 12 -8 12 -6 24 -8 16 -3 9 0 1 -1 29 0 1 1 19 1 1 1 25 3 21 5 20 7 20 10 13 9 18 18 10 14 10 20 5 15 4 21 1 27 -1 1 -1 16 -7 25 -9 19 -10 15 -16 16 -19 13 -8 4 -3 0 -7 -8 15 -10 20 -21 8 -12 6 -12 5 -13 4 -16 1 -13 1 -1 0 -24 -1 -1 -1 -13 -8 -26 -11 -19 -17 -18 -10 -7 -16 -8 -23 -7 -21 -3 -1 -1 -13 -1 -7 -2 -6 0 -1 -1 -16 -1 -1 -1 -38 1 -25 7 -14 7 -15 11 -13 14 -11 18 10 2 7 -4 16 -16 16 -11 15 -7 19 -5 19 -1 1 -1 26 1 1 1 10 0 1 1 33 2 23 5 18 8 10 7 9 9 8 11 8 17 4 15 1 15 1 1 -1 29 -6 24 -14 27 -18 18 -11 7 -3 0 -8 -9 7 -5 8 -8 10 -14 9 -21 4 -19 0 -8 1 -1 0 -27 -1 -1 -1 -11 -4 -13 -9 -15 -12 -11 -13 -6 -15 -3 -18 0 -1 1 -30 1 -1 1 -26 0 -1 1 -7 0 -10 2 -13 4 -16 8 -17 14 -9 12 -5 10 -4 16 1 20 8 20 10 14 9 9 19 14 -8 6 -4 0 -12 -6 -21 -18 -9 2 24 25 13 10 -1 2 -12 8 -16 -7 -10 -8 -14 -15 -3 0 0 24 3 0 23 20 17 11 18 9 29 10 25 5 7 0 1 1 43 1 1 -1 10 0 1 -1 12 -1 17 -4 17 -6 16 -8 20 -14 14 -14 7 -9 15 -27 7 -21 3 -16 0 -7 1 -1 0 -27 -1 -1 -1 -14 -3 -14 -5 -15 -11 -23 -17 -23 -9 -9 -15 -12 -25 -14 -15 -6 -20 -6 -26 -5 -14 -1 -1 -1 -44 -1 -1 1 -9 0 -1 1 -16 2 -25 8 -23 12 -10 7 -12 11zM97 333l8 -5 22 -7 15 -1 1 -1 23 1 16 4 12 6 14 13 2 0 7 4 6 6 3 8 3 15 -1 33 -3 14 -4 7 -8 8 -5 2 -14 -14 7 -21 1 -26 -1 -1 -1 -10 -8 -19 -5 -7 -8 -8 -13 -8 -10 -3 -16 0 -14 4 -15 9 -4 4 -3 -1zM4 250l0 10 4 0 11 -9 15 -9 19 -9 20 -7 21 -5 21 -2 1 -1 43 0 1 1 9 0 1 1 18 2 32 9 28 13 26 18 16 16 15 20 9 16 11 29 6 31 1 30 -1 1 0 11 -1 1 -1 12 -5 20 -7 18 -15 26 -12 15 -21 19 -17 11 -24 11 -24 7 -16 2 -1 1 -7 0 0 3 65 0 1 -4 15 -7 19 -13 20 -19 9 -11 11 -17 9 -18 6 -16 5 -19 2 -17 1 -1 1 -39 -1 -1 0 -10 -1 -1 -2 -17 -4 -16 -9 -24 -7 -14 -13 -20 -8 -10 -16 -16 -23 -17 -32 -16 -30 -9 -23 -3 -1 -1 -10 0 -1 -1 -34 0 -1 1 -18 1 -25 5 -37 13 -26 14 -15 11zM4 211l0 13 3 0 14 -9 25 -12 20 -7 24 -6 18 -2 1 -1 26 -1 1 -1 21 0 1 1 16 0 1 1 16 1 32 7 20 7 19 9 18 11 17 13 21 21 19 26 7 12 10 22 6 18 6 29 2 38 -1 1 -1 21 -6 28 -7 20 -10 21 -14 22 -15 18 -18 17 -14 10 0 3 25 0 0 -3 21 -20 12 -15 12 -18 10 -19 7 -17 6 -19 4 -18 2 -23 1 -1 -1 -40 -1 -1 0 -6 -4 -21 -6 -20 -6 -15 -11 -22 -13 -20 -12 -15 -27 -26 -31 -21 -21 -10 -23 -8 -36 -7 -22 -1 -1 -1 -40 0 -1 1 -13 0 -1 1 -8 0 -1 1 -18 2 -21 5 -21 7 -22 10 -14 9zM4 177l0 11 4 0 22 -12 35 -13 30 -7 20 -2 1 -1 10 0 1 -1 48 0 1 1 25 2 31 7 18 6 30 14 34 23 29 28 15 19 11 17 11 21 7 17 9 30 3 21 1 1 1 22 1 1 0 22 -1 1 0 12 -1 1 -1 14 -4 19 -8 25 -8 19 -14 25 -16 22 -16 17 0 3 19 0 0 -3 15 -18 14 -22 16 -34 7 -21 6 -26 1 -12 1 -1 0 -9 1 -1 0 -21 1 -1 -1 -1 0 -22 -1 -1 0 -8 -1 -1 -2 -18 -10 -36 -8 -20 -12 -23 -13 -20 -15 -19 -29 -28 -13 -10 -22 -14 -29 -14 -23 -8 -15 -4 -21 -4 -6 0 -1 -1 -21 -1 -1 -1 -35 0 -1 1 -12 0 -1 1 -8 0 -1 1 -18 2 -41 11 -20 8 -24 12 -2 2zM4 141l0 12 4 0 21 -10 26 -9 23 -6 21 -3 1 -1 6 0 1 -1 20 -1 1 -1 50 0 1 1 11 0 1 1 21 2 23 5 23 7 38 17 12 7 27 19 27 25 22 27 13 20 13 25 7 17 8 25 5 23 2 21 1 1 0 13 1 1 -1 41 -1 1 -2 20 -6 26 -13 36 -11 22 -17 27 -6 7 0 4 17 0 1 -5 12 -18 12 -23 8 -19 8 -24 6 -25 2 -18 1 -1 0 -7 1 -1 1 -46 -1 -1 0 -11 -1 -1 -1 -15 -5 -25 -10 -32 -7 -17 -9 -18 -16 -26 -12 -16 -15 -17 -30 -27 -20 -14 -17 -10 -33 -15 -21 -7 -36 -8 -23 -2 -1 -1 -14 0 -1 -1 -40 0 -1 1 -23 1 -1 1 -7 0 -1 1 -18 2 -26 6 -28 9 -20 9zM4 111l0 10 5 0 15 -7 43 -13 25 -5 22 -2 1 -1 10 0 1 -1 43 -1 1 1 29 1 1 1 8 0 1 1 18 2 26 6 22 7 20 8 24 12 24 15 16 12 30 28 13 15 18 25 9 15 13 26 15 43 8 42 1 21 1 1 0 34 -1 1 0 12 -1 1 0 8 -1 1 -3 23 -7 27 -10 28 -11 24 -16 27 0 3 16 0 0 -3 7 -11 9 -18 10 -24 13 -44 4 -21 2 -25 1 -1 0 -22 1 -1 -1 -5 0 -22 -1 -1 -2 -25 -5 -25 -4 -15 -13 -36 -10 -21 -14 -24 -15 -21 -17 -20 -15 -15 -24 -20 -36 -23 -40 -18 -25 -8 -26 -6 -5 0 -13 -3 -7 0 -1 -1 -23 -1 -1 -1 -44 0 -1 1 -24 1 -1 1 -21 2 -33 7 -32 10 -18 8zM4 76l0 13 3 0 20 -9 38 -12 28 -6 27 -3 1 -1 28 -1 1 -1 27 0 1 1 16 0 1 1 19 1 1 1 6 0 1 1 21 3 24 6 27 9 26 11 21 11 28 18 17 13 35 34 19 24 12 18 20 38 10 25 8 26 8 41 1 17 1 1 0 15 1 1 0 29 -1 1 -1 25 -1 1 0 7 -1 1 -2 17 -6 26 -10 31 -10 24 -13 24 0 4 16 0 0 -4 13 -27 12 -33 11 -45 3 -27 1 -1 1 -32 1 -1 -2 -45 -1 -1 0 -8 -1 -1 -2 -18 -6 -27 -8 -26 -9 -23 -11 -23 -12 -21 -15 -22 -17 -21 -35 -34 -21 -16 -27 -17 -21 -11 -31 -13 -28 -9 -30 -7 -25 -3 -1 -1 -22 -1 -1 -1 -46 0 -1 1 -22 1 -1 1 -25 3 -27 6 -35 11 -23 10zM508 22l0 3 17 16 16 18 3 0 0 -18 -3 0 -15 -16 0 -3zM458 22l0 3 17 14 25 24 28 32 12 17 4 1 0 -19 -3 0 -22 -27 -43 -42 0 -3zM402 22l0 3 16 10 33 26 30 29 15 17 20 26 17 26 8 15 3 0 0 -24 -4 -1 -19 -29 -27 -33 -38 -37 -32 -24 -1 -4zM334 22l0 3 10 4 24 13 38 25 28 23 26 26 17 20 26 37 23 43 10 24 5 16 3 0 0 -34 -4 -1 -14 -31 -17 -29 -22 -31 -15 -18 -20 -21 -21 -19 -33 -25 -24 -15 -12 -6 -1 -4zM220 22l0 3 11 1 20 5 4 0 45 14 42 19 32 19 22 16 18 15 26 26 29 37 20 33 19 42 11 34 9 43 2 25 1 1 0 16 1 1 -1 46 -1 1 -2 25 -1 1 -4 26 -12 42 -11 28 -9 18 0 3 13 0 0 -3 4 -7 11 -27 9 -28 8 -34 0 -5 3 -13 0 -7 1 -1 0 -8 4 -1 0 -79 -4 -1 0 -8 -1 -1 -2 -19 -5 -20 0 -4 -7 -22 0 -3 -10 -28 -20 -42 -22 -35 -30 -37 -20 -20 -21 -18 -34 -24 -30 -17 -36 -16 -25 -8 -1 -4zM4 51l4 0 16 -7 31 -10 30 -7 17 -2 0 -3 -61 0 -1 4 -20 6 -11 5 -5 0z"/>
<path fill="#9a650d" fill-rule="evenodd" d="M544 522l-3 0 -2 8 -8 20 -5 9 0 3 13 0 1 -6 4 -1zM4 512l0 16 5 1 18 13 16 9 17 7 1 4 62 0 0 -3 -23 -3 -16 -4 -23 -8 -30 -15 -15 -10 -8 -7zM4 282l0 16 3 0 16 -17 12 -9 18 -9 14 -5 31 -6 37 0 1 1 25 2 1 1 26 4 21 6 15 6 20 11 15 12 11 12 11 16 9 18 6 18 3 15 0 7 1 1 0 29 -1 1 -1 12 -8 26 -12 22 -9 12 -20 18 -18 11 -15 5 -7 -8 19 -11 22 -21 11 -16 6 -12 8 -24 2 -18 1 -1 -1 -32 -3 -15 -4 -12 -9 -18 -7 -10 -14 -14 -10 -7 -16 -8 -23 -7 -21 -3 -1 -1 -13 -1 -7 -2 -6 0 -1 -1 -16 -1 -1 -1 -38 1 -25 7 -23 13 -14 13 -11 15 11 3 22 -17 18 -11 23 -7 14 -1 1 -1 27 0 1 1 11 0 1 1 42 3 19 4 9 3 14 7 7 5 13 14 6 9 7 15 6 26 0 31 -1 1 0 6 -7 24 -8 16 -6 9 -20 19 -8 5 -10 4 -8 -10 13 -9 15 -17 10 -20 6 -25 0 -8 1 -1 -1 -34 -5 -18 -6 -11 -15 -15 -13 -6 -15 -3 -18 0 -1 1 -30 1 -1 1 -26 0 -1 1 -7 0 -10 2 -13 4 -19 10 -9 7 -10 11 -4 6 -7 16 -2 10 0 14 5 18 10 17 13 14 14 11 10 6 1 2 -8 6 -3 0 -11 -5 -9 -6 -17 -14 -8 2 20 21 21 16 -2 3 -11 7 -14 -5 -19 -14 -15 -16 -3 0 0 23 3 0 23 20 17 11 18 9 29 10 25 5 7 0 1 1 43 1 1 -1 10 0 1 -1 12 -1 17 -4 17 -6 16 -8 20 -14 14 -14 7 -9 15 -27 7 -21 3 -16 0 -7 1 -1 0 -27 -1 -1 -1 -14 -3 -14 -5 -15 -11 -23 -17 -23 -9 -9 -15 -12 -25 -14 -15 -6 -20 -6 -26 -5 -14 -1 -1 -1 -44 -1 -1 1 -9 0 -1 1 -16 2 -25 8 -23 12 -10 7 -12 11zM91 336l14 -8 14 -5 14 -3 24 -1 25 5 15 8 7 7 6 1 7 4 7 7 2 4 5 22 0 24 -1 1 -1 13 -3 11 -7 11 -7 6 -7 2 -13 -16 8 -19 1 -10 1 -1 0 -20 -1 -1 -1 -10 -8 -19 -5 -7 -8 -8 -7 -5 -12 -5 -20 -1 -14 4 -15 9 -8 8 -9 -5zM4 250l0 10 3 0 8 -7 18 -11 19 -9 23 -8 17 -4 20 -2 1 -1 35 -1 1 1 14 0 1 1 8 0 1 1 17 2 34 10 29 14 28 21 15 17 13 19 10 20 8 23 4 18 1 15 1 1 0 32 -6 32 -8 22 -9 17 -16 22 -16 16 -19 14 -21 11 -23 8 -17 4 -12 1 0 3 59 0 1 -4 15 -7 19 -13 20 -19 9 -11 11 -17 9 -18 6 -16 5 -19 2 -17 1 -1 1 -39 -1 -1 0 -10 -1 -1 -2 -17 -4 -16 -9 -24 -7 -14 -13 -20 -8 -10 -16 -16 -23 -17 -32 -16 -30 -9 -23 -3 -1 -1 -10 0 -1 -1 -34 0 -1 1 -18 1 -25 5 -37 13 -26 14 -15 11zM4 211l0 12 4 0 12 -8 20 -10 28 -10 32 -7 6 0 1 -1 21 -1 1 -1 34 0 1 1 22 1 1 1 6 0 16 3 22 6 18 7 16 8 19 12 13 10 22 22 11 14 15 24 8 17 7 19 5 19 2 16 1 1 0 8 1 1 0 38 -1 1 -2 20 -6 23 -7 18 -9 18 -10 16 -14 18 -19 19 -17 13 0 3 23 0 0 -3 21 -20 12 -15 12 -18 10 -19 7 -17 6 -19 4 -18 2 -23 1 -1 -1 -40 -1 -1 0 -6 -4 -21 -6 -20 -6 -15 -11 -22 -13 -20 -12 -15 -27 -26 -31 -21 -21 -10 -23 -8 -36 -7 -22 -1 -1 -1 -40 0 -1 1 -13 0 -1 1 -8 0 -1 1 -18 2 -21 5 -21 7 -22 10 -14 9zM4 177l0 11 3 0 22 -12 17 -7 25 -8 22 -5 19 -2 1 -1 27 -1 1 -1 20 0 1 1 27 1 41 8 31 11 22 11 19 12 17 13 17 16 17 20 12 17 10 17 9 19 10 28 7 32 0 7 1 1 0 9 1 1 0 36 -1 1 -1 17 -5 24 -11 32 -18 34 -15 21 -17 19 0 3 17 0 0 -3 15 -18 14 -22 16 -34 7 -21 6 -26 1 -12 1 -1 0 -9 1 -1 0 -21 1 -1 -1 -1 0 -22 -1 -1 0 -8 -1 -1 -2 -18 -10 -36 -8 -20 -12 -23 -13 -20 -15 -19 -29 -28 -13 -10 -22 -14 -29 -14 -23 -8 -15 -4 -21 -4 -6 0 -1 -1 -21 -1 -1 -1 -35 0 -1 1 -12 0 -1 1 -8 0 -1 1 -18 2 -41 11 -20 8 -24 12 -2 2zM4 141l0 12 3 0 21 -10 29 -10 20 -5 21 -4 6 0 1 -1 18 -1 1 -1 39 -1 1 1 18 0 1 1 9 0 1 1 20 2 27 6 19 6 20 8 18 9 17 10 21 15 13 11 16 16 15 18 14 20 10 17 11 23 11 31 7 31 1 13 1 1 0 10 1 1 0 42 -1 1 0 9 -1 1 -2 19 -6 25 -10 28 -12 25 -8 14 -17 24 0 3 16 0 1 -5 12 -18 12 -23 8 -19 8 -24 6 -25 2 -18 1 -1 0 -7 1 -1 1 -46 -1 -1 0 -11 -1 -1 -1 -15 -5 -25 -10 -32 -7 -17 -9 -18 -16 -26 -12 -16 -15 -17 -30 -27 -20 -14 -17 -10 -33 -15 -21 -7 -36 -8 -23 -2 -1 -1 -14 0 -1 -1 -40 0 -1 1 -23 1 -1 1 -7 0 -1 1 -18 2 -26 6 -28 9 -20 9zM4 111l0 10 4 0 15 -7 31 -10 31 -7 18 -2 1 -1 8 0 1 -1 9 0 1 -1 53 -1 1 1 15 0 1 1 9 0 1 1 20 2 31 7 25 8 15 6 28 14 37 25 12 10 20 20 12 14 16 22 11 18 13 26 9 23 7 23 5 23 2 19 1 1 1 33 1 1 -1 4 0 22 -1 1 -2 24 -4 20 -5 19 -13 35 -14 28 -11 17 0 3 15 0 0 -3 7 -11 9 -18 10 -24 13 -44 4 -21 2 -25 1 -1 0 -22 1 -1 -1 -5 0 -22 -1 -1 -2 -25 -5 -25 -4 -15 -13 -36 -10 -21 -14 -24 -15 -21 -17 -20 -15 -15 -24 -20 -36 -23 -40 -18 -25 -8 -26 -6 -5 0 -13 -3 -7 0 -1 -1 -23 -1 -1 -1 -44 0 -1 1 -24 1 -1 1 -21 2 -33 7 -32 10 -18 8zM4 76l0 12 4 0 26 -11 26 -8 31 -7 18 -2 1 -1 7 0 1 -1 23 -1 1 -1 43 0 1 1 13 0 1 1 8 0 1 1 7 0 1 1 18 2 30 7 28 9 24 10 20 10 39 25 23 19 16 16 17 20 21 30 21 40 8 20 8 25 5 20 3 21 1 1 0 6 1 1 1 20 1 1 0 48 -1 1 0 11 -1 1 0 8 -1 1 -2 18 -7 30 -9 28 -10 24 -14 26 0 3 15 0 0 -4 13 -27 12 -33 11 -45 3 -27 1 -1 1 -32 1 -1 -2 -45 -1 -1 0 -8 -1 -1 -2 -18 -6 -27 -8 -26 -9 -23 -11 -23 -12 -21 -15 -22 -17 -21 -35 -34 -21 -16 -27 -17 -21 -11 -31 -13 -28 -9 -30 -7 -25 -3 -1 -1 -22 -1 -1 -1 -46 0 -1 1 -22 1 -1 1 -25 3 -27 6 -35 11 -23 10zM510 22l0 3 19 19 12 14 3 0 0 -17 -3 0 -15 -16 0 -3zM459 22l0 3 26 22 18 18 21 24 17 23 3 0 0 -18 -3 0 -22 -27 -43 -42 0 -3zM403 22l0 3 23 15 25 20 32 31 14 16 22 29 10 15 11 20 4 1 0 -22 -4 -1 -19 -29 -27 -33 -38 -37 -32 -24 -1 -4zM335 22l0 3 8 3 28 15 32 21 30 24 29 29 16 19 24 34 24 44 11 26 4 13 3 0 0 -31 -4 -1 -14 -31 -17 -29 -22 -31 -15 -18 -20 -21 -21 -19 -33 -25 -24 -15 -12 -6 -1 -4zM222 22l0 3 11 1 31 7 37 12 42 19 32 19 32 24 33 32 27 34 20 32 17 35 14 39 10 43 2 20 1 1 0 8 1 1 0 13 1 1 -1 57 -1 1 -1 16 -1 1 0 6 -4 21 -2 5 -2 12 -10 32 -11 27 -8 15 0 3 12 0 0 -3 4 -7 11 -27 9 -28 8 -34 0 -5 3 -13 0 -7 1 -1 0 -8 4 -1 0 -79 -4 -1 0 -8 -1 -1 -2 -19 -5 -20 0 -4 -7 -22 0 -3 -10 -28 -20 -42 -22 -35 -30 -37 -20 -20 -21 -18 -34 -24 -30 -17 -36 -16 -25 -8 -1 -4zM4 51l3 0 13 -6 34 -11 40 -9 6 0 0 -3 -59 0 -1 4 -20 6 -11 5 -5 0z"/>
<path fill="#a1710f" fill-rule="evenodd" d="M544 527l-3 0 -9 25 -4 7 0 3 11 0 1 -6 4 -1zM4 512l0 16 5 1 18 13 16 9 17 7 1 4 57 0 0 -3 -12 -1 -21 -5 -28 -10 -22 -11 -17 -11 -11 -9zM4 282l0 15 3 0 16 -17 14 -10 28 -12 29 -6 30 -1 1 1 23 1 1 1 7 0 1 1 18 2 26 6 22 8 16 8 12 8 14 13 12 15 12 21 8 22 4 20 1 27 -1 1 0 10 -1 1 -1 10 -8 25 -9 17 -8 11 -23 22 -12 8 -14 7 -15 5 -4 0 -7 -7 2 -2 2 0 14 -7 11 -7 22 -21 11 -16 11 -25 6 -30 0 -24 -1 -1 0 -7 -3 -15 -10 -25 -10 -15 -14 -14 -10 -7 -16 -8 -15 -5 -30 -6 -6 0 -1 -1 -6 0 -1 -1 -20 -2 -1 -1 -8 0 -1 -1 -38 1 -25 7 -23 13 -14 13 -5 7 9 4 17 -10 12 -9 9 -4 23 -6 19 -1 1 -1 25 1 1 1 9 0 1 1 42 3 21 5 21 10 18 18 6 9 7 15 5 17 1 12 1 1 -1 32 -7 26 -12 22 -17 18 -9 7 -13 7 -10 3 -7 -11 8 -4 11 -8 12 -13 11 -19 6 -19 1 -10 1 -1 0 -8 1 -1 0 -27 -3 -16 -3 -9 -6 -11 -15 -15 -13 -6 -15 -3 -18 0 -1 1 -30 1 -1 1 -26 0 -1 1 -7 0 -10 2 -13 4 -19 10 -9 7 -10 11 -4 6 -7 16 -2 10 0 14 5 18 4 8 10 14 15 14 23 15 2 3 -9 7 -9 -3 -7 -4 -24 -18 -4 0 -5 2 22 21 24 17 -11 9 -5 0 -10 -3 -18 -11 -10 -8 -16 -17 -3 0 0 22 3 0 23 20 17 11 18 9 29 10 25 5 7 0 1 1 43 1 1 -1 10 0 1 -1 12 -1 17 -4 17 -6 16 -8 20 -14 14 -14 7 -9 15 -27 7 -21 3 -16 0 -7 1 -1 0 -27 -1 -1 -1 -14 -3 -14 -5 -15 -11 -23 -17 -23 -9 -9 -15 -12 -25 -14 -15 -6 -20 -6 -26 -5 -14 -1 -1 -1 -44 -1 -1 1 -9 0 -1 1 -16 2 -25 8 -23 12 -10 7 -12 11zM86 340l11 -8 22 -9 14 -3 24 -1 25 5 12 6 7 6 6 0 10 5 8 8 3 6 5 22 0 23 -1 1 -1 14 -4 14 -5 9 -11 11 -5 2 -5 0 -12 -18 8 -14 3 -9 1 -10 1 -1 0 -20 -1 -1 -1 -10 -8 -19 -5 -7 -12 -11 -9 -5 -10 -3 -16 0 -14 4 -15 9 -11 11 -2 0zM4 250l0 9 3 0 16 -12 23 -12 21 -8 19 -5 16 -3 7 0 1 -1 10 0 1 -1 33 0 1 1 11 0 1 1 7 0 1 1 6 0 15 3 27 8 28 13 13 8 13 10 18 19 14 20 10 19 9 25 4 17 1 12 1 1 0 11 1 1 -1 30 -5 26 -8 23 -12 22 -8 11 -25 25 -17 12 -19 10 -29 10 -19 3 0 3 53 0 1 -4 15 -7 19 -13 20 -19 9 -11 11 -17 9 -18 6 -16 5 -19 2 -17 1 -1 1 -39 -1 -1 0 -10 -1 -1 -2 -17 -4 -16 -9 -24 -7 -14 -13 -20 -8 -10 -16 -16 -23 -17 -32 -16 -30 -9 -23 -3 -1 -1 -10 0 -1 -1 -34 0 -1 1 -18 1 -25 5 -37 13 -26 14 -15 11zM4 211l0 11 4 0 18 -11 28 -12 28 -8 16 -3 6 0 1 -1 7 0 1 -1 55 -1 1 1 11 0 1 1 14 1 20 4 20 6 33 15 28 19 26 26 10 13 12 19 12 25 7 20 7 34 1 41 -1 1 0 9 -1 1 -1 12 -4 17 -8 23 -12 24 -13 19 -16 18 -16 15 -14 10 0 3 22 0 0 -3 21 -20 12 -15 12 -18 10 -19 7 -17 6 -19 4 -18 2 -23 1 -1 -1 -40 -1 -1 0 -6 -4 -21 -6 -20 -6 -15 -11 -22 -13 -20 -12 -15 -27 -26 -31 -21 -21 -10 -23 -8 -36 -7 -22 -1 -1 -1 -40 0 -1 1 -13 0 -1 1 -8 0 -1 1 -18 2 -21 5 -21 7 -22 10 -14 9zM4 177l0 10 4 0 20 -11 28 -11 30 -8 16 -2 1 -1 7 0 1 -1 21 -1 1 -1 36 0 1 1 12 0 1 1 16 1 25 5 23 7 15 6 22 11 29 19 12 10 15 15 15 18 13 19 18 35 9 25 5 20 2 17 1 1 0 7 1 1 0 14 1 1 0 17 -1 1 0 14 -1 1 -1 14 -6 27 -10 28 -17 32 -16 22 -17 18 0 3 16 0 0 -3 15 -18 14 -22 16 -34 7 -21 6 -26 1 -12 1 -1 0 -9 1 -1 0 -21 1 -1 -1 -1 0 -22 -1 -1 0 -8 -1 -1 -2 -18 -10 -36 -8 -20 -12 -23 -13 -20 -15 -19 -29 -28 -13 -10 -22 -14 -29 -14 -23 -8 -15 -4 -21 -4 -6 0 -1 -1 -21 -1 -1 -1 -35 0 -1 1 -12 0 -1 1 -8 0 -1 1 -18 2 -41 11 -20 8 -24 12 -2 2zM4 141l0 11 4 0 14 -7 24 -9 3 0 22 -7 32 -6 17 -1 1 -1 15 0 1 -1 32 0 1 1 15 0 1 1 9 0 1 1 19 2 26 6 22 7 37 17 35 23 12 10 19 19 11 13 19 27 17 32 8 20 8 26 5 25 1 14 1 1 0 13 1 1 -1 40 -1 1 0 8 -1 1 -2 17 -6 24 -10 28 -13 27 -23 34 0 3 14 0 1 -5 12 -18 12 -23 8 -19 8 -24 6 -25 2 -18 1 -1 0 -7 1 -1 1 -46 -1 -1 0 -11 -1 -1 -1 -15 -5 -25 -10 -32 -7 -17 -9 -18 -16 -26 -12 -16 -15 -17 -30 -27 -20 -14 -17 -10 -33 -15 -21 -7 -36 -8 -23 -2 -1 -1 -14 0 -1 -1 -40 0 -1 1 -23 1 -1 1 -7 0 -1 1 -18 2 -26 6 -28 9 -20 9zM4 111l0 10 3 0 18 -8 21 -7 27 -7 21 -3 1 -1 6 0 1 -1 17 -1 1 -1 13 0 1 -1 47 0 1 1 13 0 1 1 8 0 1 1 20 2 27 6 28 9 34 15 16 9 24 16 16 13 25 25 19 24 10 15 13 23 8 17 15 43 6 27 2 21 1 1 1 49 -1 1 0 11 -1 1 -1 15 -5 26 -3 8 -1 7 -13 36 -10 21 -15 24 0 3 13 0 0 -3 7 -11 9 -18 10 -24 13 -44 4 -21 2 -25 1 -1 0 -22 1 -1 -1 -5 0 -22 -1 -1 -2 -25 -5 -25 -4 -15 -13 -36 -10 -21 -14 -24 -15 -21 -17 -20 -15 -15 -24 -20 -36 -23 -40 -18 -25 -8 -26 -6 -5 0 -13 -3 -7 0 -1 -1 -23 -1 -1 -1 -44 0 -1 1 -24 1 -1 1 -21 2 -33 7 -32 10 -18 8zM4 76l0 12 3 0 26 -11 46 -13 21 -3 1 -1 13 -1 1 -1 21 -1 1 -1 53 0 1 1 28 2 1 1 22 3 28 7 27 9 17 7 26 13 17 10 27 19 12 10 24 24 11 13 22 31 19 35 12 29 8 25 9 44 1 16 1 1 0 13 1 1 0 34 -1 1 0 14 -1 1 0 8 -1 1 -2 20 -7 31 -7 23 -12 30 -12 24 -2 2 0 3 13 0 0 -4 13 -27 12 -33 11 -45 3 -27 1 -1 1 -32 1 -1 -2 -45 -1 -1 0 -8 -1 -1 -2 -18 -6 -27 -8 -26 -9 -23 -11 -23 -12 -21 -15 -22 -17 -21 -35 -34 -21 -16 -27 -17 -21 -11 -31 -13 -28 -9 -30 -7 -25 -3 -1 -1 -22 -1 -1 -1 -46 0 -1 1 -22 1 -1 1 -25 3 -27 6 -35 11 -23 10zM511 22l0 3 22 22 8 10 3 0 0 -16 -3 0 -15 -16 0 -3zM460 22l1 4 22 18 24 24 19 22 15 20 3 0 0 -16 -3 0 -22 -27 -43 -42 0 -3zM405 22l1 4 20 13 32 26 28 28 32 40 17 26 6 12 3 0 0 -21 -4 -1 -19 -29 -27 -33 -38 -37 -32 -24 -1 -4zM336 22l0 3 6 2 30 16 43 29 28 24 22 23 21 26 22 33 20 38 9 21 4 13 3 0 0 -28 -4 -1 -14 -31 -17 -29 -22 -31 -15 -18 -20 -21 -21 -19 -33 -25 -24 -15 -12 -6 -1 -4zM224 22l0 3 11 1 34 8 43 15 32 15 38 23 33 26 26 26 29 37 19 31 16 33 14 39 10 42 2 19 1 1 0 8 1 1 0 10 1 1 0 54 -1 1 -2 27 -1 1 -4 26 -13 46 -9 23 -10 20 0 3 10 0 0 -3 4 -7 11 -27 9 -28 8 -34 0 -5 3 -13 0 -7 1 -1 0 -8 4 -1 0 -79 -4 -1 0 -8 -1 -1 -2 -19 -5 -20 0 -4 -7 -22 0 -3 -10 -28 -20 -42 -22 -35 -30 -37 -20 -20 -21 -18 -34 -24 -30 -17 -36 -16 -25 -8 -1 -4zM4 50l4 0 22 -9 26 -8 31 -7 11 -1 0 -3 -57 0 -1 4 -20 6 -11 5 -5 0z"/>
<path fill="#aa7e14" fill-rule="evenodd" d="M544 532l-3 0 -8 22 -3 5 0 3 9 0 1 -6 4 -1zM4 513l0 15 5 1 18 13 16 9 17 7 1 4 52 0 0 -3 -5 0 -22 -5 -33 -12 -26 -14 -20 -15zM4 282l0 13 3 0 17 -17 13 -9 14 -7 22 -7 17 -2 1 -1 8 0 1 -1 30 0 1 1 11 0 1 1 22 2 26 5 30 9 20 10 15 11 13 13 10 13 15 29 7 24 1 12 1 1 0 30 -5 26 -5 14 -8 16 -8 12 -16 16 -25 17 -10 5 -17 6 -13 1 -7 -7 3 -2 11 -3 14 -7 16 -11 20 -21 8 -12 10 -22 4 -14 2 -18 1 -1 0 -24 -1 -1 0 -7 -3 -15 -10 -25 -10 -15 -14 -14 -10 -7 -16 -8 -15 -5 -30 -6 -6 0 -1 -1 -6 0 -1 -1 -20 -2 -1 -1 -8 0 -1 -1 -38 1 -25 7 -23 13 -13 12 9 5 6 -2 18 -12 9 -4 14 -4 17 -1 1 -1 27 0 1 1 11 0 1 1 9 0 1 1 33 2 26 5 16 7 9 6 13 13 10 15 5 11 5 16 1 10 1 1 0 9 1 1 0 14 -1 1 -1 16 -8 26 -12 21 -9 9 -21 16 -12 6 -10 3 -4 0 -7 -10 21 -12 13 -12 10 -14 9 -21 4 -19 0 -8 1 -1 0 -27 -3 -16 -7 -17 -5 -7 -12 -11 -13 -6 -15 -3 -18 0 -1 1 -30 1 -1 1 -26 0 -1 1 -7 0 -10 2 -13 4 -19 10 -9 7 -10 11 -4 6 -7 16 -2 10 0 14 5 18 4 8 10 14 9 9 14 11 24 15 -8 8 -3 0 -11 -4 -19 -12 -10 -8 -4 0 -5 2 22 20 27 18 -2 3 -9 7 -3 0 -12 -3 -18 -10 -16 -12 -18 -19 -3 0 0 21 3 0 23 20 17 11 18 9 29 10 25 5 7 0 1 1 43 1 1 -1 10 0 1 -1 12 -1 17 -4 17 -6 16 -8 20 -14 14 -14 7 -9 15 -27 7 -21 3 -16 0 -7 1 -1 0 -27 -1 -1 -1 -14 -3 -14 -5 -15 -11 -23 -17 -23 -9 -9 -15 -12 -25 -14 -15 -6 -20 -6 -26 -5 -14 -1 -1 -1 -44 -1 -1 1 -9 0 -1 1 -16 2 -25 8 -23 12 -10 7 -12 11zM81 344l8 -7 16 -9 22 -7 15 -1 1 -1 14 0 1 1 13 1 11 3 14 8 9 0 11 5 12 13 4 11 3 16 0 23 -1 1 0 8 -1 1 -1 10 -5 15 -10 16 -10 8 -3 1 -6 -1 -4 -4 -3 -9 -5 -9 7 -10 7 -17 1 -10 1 -1 0 -20 -1 -1 -1 -10 -8 -19 -5 -7 -8 -8 -7 -5 -12 -5 -20 -1 -14 4 -15 9 -15 15zM4 250l0 8 3 0 13 -10 24 -13 25 -9 15 -4 16 -3 6 0 1 -1 9 0 1 -1 41 0 1 1 18 1 21 4 35 11 19 9 23 16 19 19 14 19 12 22 9 24 4 16 2 20 1 1 0 33 -1 1 0 8 -5 24 -7 20 -11 21 -12 17 -18 18 -14 10 -26 14 -21 8 -15 4 -9 1 0 3 48 0 1 -4 15 -7 19 -13 20 -19 9 -11 11 -17 9 -18 6 -16 5 -19 2 -17 1 -1 1 -39 -1 -1 0 -10 -1 -1 -2 -17 -4 -16 -9 -24 -7 -14 -13 -20 -8 -10 -16 -16 -23 -17 -32 -16 -30 -9 -23 -3 -1 -1 -10 0 -1 -1 -34 0 -1 1 -18 1 -25 5 -37 13 -26 14 -15 11zM4 211l0 10 3 0 13 -8 24 -11 25 -8 34 -7 17 -1 1 -1 51 0 1 1 17 1 37 8 18 6 18 8 27 17 11 9 18 18 15 19 12 19 15 33 5 16 5 24 1 17 1 1 0 25 -1 1 0 10 -1 1 -1 13 -5 21 -9 25 -9 18 -13 20 -8 10 -20 20 -18 13 0 3 19 0 0 -3 21 -20 12 -15 12 -18 10 -19 7 -17 6 -19 4 -18 2 -23 1 -1 -1 -40 -1 -1 0 -6 -4 -21 -6 -20 -6 -15 -11 -22 -13 -20 -12 -15 -27 -26 -31 -21 -21 -10 -23 -8 -36 -7 -22 -1 -1 -1 -40 0 -1 1 -13 0 -1 1 -8 0 -1 1 -18 2 -21 5 -21 7 -22 10 -14 9zM4 177l0 9 4 0 16 -9 34 -13 22 -6 21 -4 6 0 1 -1 19 -1 1 -1 46 0 1 1 11 0 1 1 14 1 32 7 29 10 21 10 18 11 16 12 27 26 16 20 10 15 17 33 10 28 4 16 3 23 1 1 0 10 1 1 -1 44 -8 40 -10 28 -15 29 -17 24 -16 17 0 3 13 0 0 -3 15 -18 14 -22 16 -34 7 -21 6 -26 1 -12 1 -1 0 -9 1 -1 0 -21 1 -1 -1 -1 0 -22 -1 -1 0 -8 -1 -1 -2 -18 -10 -36 -8 -20 -12 -23 -13 -20 -15 -19 -29 -28 -13 -10 -22 -14 -29 -14 -23 -8 -15 -4 -21 -4 -6 0 -1 -1 -21 -1 -1 -1 -35 0 -1 1 -12 0 -1 1 -8 0 -1 1 -18 2 -41 11 -20 8 -24 12 -2 2zM4 141l0 10 5 0 22 -10 27 -9 31 -7 19 -2 1 -1 8 0 1 -1 56 -1 1 1 13 0 1 1 22 2 24 5 32 10 15 6 22 11 19 12 16 12 31 30 13 16 15 22 19 37 11 31 8 37 1 17 1 1 0 43 -1 1 0 9 -1 1 0 7 -1 1 -2 16 -8 30 -10 26 -15 29 -17 25 0 3 11 0 1 -5 12 -18 12 -23 8 -19 8 -24 6 -25 2 -18 1 -1 0 -7 1 -1 1 -46 -1 -1 0 -11 -1 -1 -1 -15 -5 -25 -10 -32 -7 -17 -9 -18 -16 -26 -12 -16 -15 -17 -30 -27 -20 -14 -17 -10 -33 -15 -21 -7 -36 -8 -23 -2 -1 -1 -14 0 -1 -1 -40 0 -1 1 -23 1 -1 1 -7 0 -1 1 -18 2 -26 6 -28 9 -20 9zM4 111l0 9 4 0 16 -7 39 -12 37 -7 16 -1 1 -1 12 0 1 -1 56 0 1 1 11 0 1 1 8 0 1 1 24 3 25 6 22 7 3 2 13 4 27 13 35 23 20 17 12 12 22 26 15 22 20 38 8 20 7 22 5 21 3 24 1 1 2 43 -1 1 0 17 -1 1 0 9 -1 1 -2 20 -7 30 -9 27 -17 37 -11 18 0 3 10 0 0 -3 7 -11 9 -18 10 -24 13 -44 4 -21 2 -25 1 -1 0 -22 1 -1 -1 -5 0 -22 -1 -1 -2 -25 -5 -25 -4 -15 -13 -36 -10 -21 -14 -24 -15 -21 -17 -20 -15 -15 -24 -20 -36 -23 -40 -18 -25 -8 -26 -6 -5 0 -13 -3 -7 0 -1 -1 -23 -1 -1 -1 -44 0 -1 1 -24 1 -1 1 -21 2 -33 7 -32 10 -18 8zM4 76l0 11 4 0 21 -9 32 -10 32 -7 27 -3 1 -1 10 0 1 -1 18 0 1 -1 44 1 1 1 10 0 1 1 7 0 1 1 24 3 22 5 38 12 22 9 20 10 17 10 24 17 20 17 14 14 14 16 18 24 17 28 9 18 9 21 10 30 5 20 3 21 1 1 0 6 1 1 1 18 1 1 0 23 1 1 -3 48 -1 1 0 6 -1 1 -4 26 -7 26 -15 40 -13 25 0 4 10 0 0 -4 13 -27 12 -33 11 -45 3 -27 1 -1 1 -32 1 -1 -2 -45 -1 -1 0 -8 -1 -1 -2 -18 -6 -27 -8 -26 -9 -23 -11 -23 -12 -21 -15 -22 -17 -21 -35 -34 -21 -16 -27 -17 -21 -11 -31 -13 -28 -9 -30 -7 -25 -3 -1 -1 -22 -1 -1 -1 -46 0 -1 1 -22 1 -1 1 -25 3 -27 6 -35 11 -23 10zM512 22l0 3 29 30 3 0 0 -14 -3 0 -15 -16 0 -3zM462 22l0 3 19 16 29 29 22 26 9 13 3 0 0 -15 -3 0 -22 -27 -43 -42 0 -3zM407 22l1 4 10 6 24 18 35 32 32 37 23 33 9 16 3 0 0 -18 -4 -1 -19 -29 -27 -33 -38 -37 -32 -24 -1 -4zM338 22l0 3 24 11 40 25 28 22 29 28 23 27 23 33 22 40 14 35 3 0 0 -24 -4 -1 -14 -31 -17 -29 -22 -31 -15 -18 -20 -21 -21 -19 -33 -25 -24 -15 -12 -6 -1 -4zM226 22l0 3 5 0 32 7 35 11 23 9 36 18 28 18 29 23 28 28 27 34 20 32 18 37 15 43 9 40 2 21 1 1 0 9 1 1 0 15 1 1 -1 46 -1 1 0 10 -1 1 0 7 -1 1 -3 24 -8 33 -9 27 -8 20 -8 16 0 3 8 0 0 -3 4 -7 11 -27 9 -28 8 -34 0 -5 3 -13 0 -7 1 -1 0 -8 4 -1 0 -79 -4 -1 0 -8 -1 -1 -2 -19 -5 -20 0 -4 -7 -22 0 -3 -10 -28 -20 -42 -22 -35 -30 -37 -20 -20 -21 -18 -34 -24 -30 -17 -36 -16 -25 -8 -1 -4zM4 50l6 -1 16 -7 25 -8 24 -6 21 -3 0 -3 -55 0 -1 4 -20 6 -11 5 -5 0z"/>
<path fill="#c19125" fill-rule="evenodd" d="M544 537l-3 0 -2 7 -7 15 0 3 7 0 1 -6 4 -1zM4 514l0 14 5 1 18 13 16 9 17 7 1 4 48 0 0 -3 -10 -1 -23 -6 -26 -10 -22 -12 -21 -16zM216 324l-10 -5 -11 -3 -25 -1 -1 1 -10 0 -1 1 -46 1 -1 1 -7 0 -10 2 -15 5 -4 22 -6 6 -6 9 -5 11 -2 8 0 9 -1 1 1 1 0 9 3 11 8 15 18 19 19 13 22 10 13 3 13 1 1 -1 14 -1 20 -9 -1 -10 -4 -13 9 -10 6 -11 5 -20 0 -20 -1 -1 -1 -10 -3 -9 -10 -17 -8 -8 -13 -8 -10 -3 -16 0 -14 4 -15 9 -17 18 -18 -6 13 -11 16 -9 14 -5 14 -3 24 -1 1 1 8 0 13 3 12 6 14 -1 12 6 8 8 4 6 5 13 2 9 0 7 1 1 0 21 -1 1 -1 15 -6 22 -10 21 -2 2 1 2 3 0 8 -11 9 -21 4 -19 0 -8 1 -1 0 -27 -3 -16 -7 -17 -5 -7zM4 282l0 11 3 0 13 -13 17 -12 16 -8 14 -5 26 -5 22 0 1 1 18 0 1 1 18 1 1 1 19 2 6 2 14 1 16 4 11 4 18 9 17 12 17 17 14 20 8 16 6 17 4 20 1 29 -1 1 0 9 -1 1 -1 11 -10 30 -13 22 -18 19 -18 12 -35 14 -8 2 -13 0 -8 -8 24 -7 14 -7 16 -11 20 -21 8 -12 10 -22 4 -14 2 -18 1 -1 0 -24 -1 -1 0 -7 -3 -15 -10 -25 -10 -15 -14 -14 -10 -7 -16 -8 -15 -5 -30 -6 -6 0 -1 -1 -6 0 -1 -1 -20 -2 -1 -1 -8 0 -1 -1 -38 1 -25 7 -14 7 -15 11 9 6 2 0 14 -9 14 -6 22 -5 24 0 6 2 28 2 1 1 35 1 19 4 18 8 9 6 15 15 7 10 8 16 4 12 2 16 1 1 0 29 -1 1 0 6 -7 26 -6 13 -9 14 -12 12 -7 5 -8 3 -5 4 -15 7 -7 2 -10 0 -6 -11 -13 3 -25 -1 -20 -6 -18 -9 -8 8 -6 0 -13 -6 -22 -15 -4 -1 -6 3 4 4 22 17 17 11 5 2 2 3 -10 9 -9 0 -9 -3 -19 -10 -12 -8 -12 -10 -15 -16 -3 0 0 19 3 0 23 20 17 11 18 9 29 10 25 5 7 0 1 1 43 1 1 -1 10 0 1 -1 12 -1 17 -4 17 -6 16 -8 20 -14 14 -14 7 -9 15 -27 7 -21 3 -16 0 -7 1 -1 0 -27 -1 -1 -1 -14 -3 -14 -5 -15 -11 -23 -17 -23 -9 -9 -15 -12 -25 -14 -15 -6 -20 -6 -26 -5 -14 -1 -1 -1 -44 -1 -1 1 -9 0 -1 1 -16 2 -25 8 -23 12 -10 7 -12 11zM4 250l0 7 3 0 18 -13 21 -11 15 -6 21 -6 18 -2 1 -1 11 0 1 -1 33 -1 1 1 15 0 1 1 9 0 20 4 8 0 23 6 15 6 15 8 11 7 15 12 19 20 14 20 11 21 8 22 4 17 1 12 1 1 0 11 1 1 -1 32 -1 1 0 6 -3 16 -9 27 -10 20 -15 21 -18 18 -12 9 -20 11 -13 5 -35 7 0 3 44 0 1 -4 15 -7 19 -13 20 -19 9 -11 11 -17 9 -18 6 -16 5 -19 2 -17 1 -1 1 -39 -1 -1 0 -10 -1 -1 -2 -17 -4 -16 -9 -24 -7 -14 -13 -20 -8 -10 -16 -16 -23 -17 -32 -16 -30 -9 -23 -3 -1 -1 -10 0 -1 -1 -34 0 -1 1 -18 1 -25 5 -37 13 -26 14 -15 11zM4 211l0 9 3 0 16 -10 30 -13 26 -7 5 0 7 -2 9 0 8 -2 25 -1 1 -1 24 0 1 1 16 0 1 1 9 0 8 2 15 1 15 3 19 6 29 14 14 9 14 11 24 24 16 21 8 13 12 24 4 13 2 3 8 35 1 20 1 1 0 17 -1 1 0 12 -1 1 0 7 -1 1 -2 16 -11 35 -13 26 -12 18 -8 10 -22 22 -10 7 0 3 13 0 0 -3 21 -20 12 -15 12 -18 10 -19 7 -17 6 -19 4 -18 2 -23 1 -1 -1 -40 -1 -1 0 -6 -4 -21 -6 -20 -6 -15 -11 -22 -13 -20 -12 -15 -27 -26 -31 -21 -21 -10 -23 -8 -36 -7 -22 -1 -1 -1 -40 0 -1 1 -13 0 -1 1 -8 0 -1 1 -18 2 -21 5 -21 7 -22 10 -14 9zM4 177l0 8 3 0 27 -14 25 -9 21 -5 12 -1 14 -3 7 0 1 -1 44 -2 1 1 19 0 1 1 10 0 15 3 8 0 16 3 21 6 35 16 31 21 33 32 24 33 21 43 7 22 4 18 2 21 1 1 0 15 1 1 -2 38 -1 1 0 6 -3 16 -4 15 -10 28 -12 24 -15 23 -18 21 0 3 9 0 0 -3 15 -18 14 -22 16 -34 7 -21 6 -26 1 -12 1 -1 0 -9 1 -1 0 -21 1 -1 -1 -1 0 -22 -1 -1 0 -8 -1 -1 -2 -18 -10 -36 -8 -20 -12 -23 -13 -20 -15 -19 -29 -28 -13 -10 -22 -14 -29 -14 -23 -8 -15 -4 -21 -4 -6 0 -1 -1 -21 -1 -1 -1 -35 0 -1 1 -12 0 -1 1 -8 0 -1 1 -18 2 -41 11 -20 8 -24 12 -2 2zM4 141l0 9 3 0 30 -13 24 -7 32 -6 22 -2 1 -1 11 0 1 -1 50 0 1 1 11 0 1 1 8 0 1 1 20 2 1 1 11 1 29 8 20 8 20 10 32 21 29 26 26 31 16 25 9 17 10 23 8 25 2 12 2 5 0 5 3 13 0 8 1 1 1 41 -1 1 -1 21 -1 1 0 6 -4 21 -5 19 -12 32 -16 31 -14 20 0 4 8 0 1 -5 12 -18 12 -23 8 -19 8 -24 6 -25 2 -18 1 -1 0 -7 1 -1 1 -46 -1 -1 0 -11 -1 -1 -1 -15 -5 -25 -10 -32 -7 -17 -9 -18 -16 -26 -12 -16 -15 -17 -30 -27 -20 -14 -17 -10 -33 -15 -21 -7 -36 -8 -23 -2 -1 -1 -14 0 -1 -1 -40 0 -1 1 -23 1 -1 1 -7 0 -1 1 -18 2 -26 6 -28 9 -20 9zM4 111l0 8 3 0 18 -8 34 -10 38 -6 1 -1 27 -2 1 -1 19 0 1 -1 43 1 1 1 10 0 1 1 8 0 8 2 21 2 38 10 25 10 20 10 35 23 18 15 21 21 15 18 18 26 20 38 7 17 8 25 6 27 2 21 1 1 1 51 -1 1 0 11 -1 1 0 8 -1 1 -2 18 -6 26 -8 25 -9 22 -11 22 -9 14 0 3 8 0 0 -3 7 -11 9 -18 10 -24 13 -44 4 -21 2 -25 1 -1 0 -22 1 -1 -1 -5 0 -22 -1 -1 -2 -25 -5 -25 -4 -15 -13 -36 -10 -21 -14 -24 -15 -21 -17 -20 -15 -15 -24 -20 -36 -23 -40 -18 -25 -8 -26 -6 -5 0 -13 -3 -7 0 -1 -1 -23 -1 -1 -1 -44 0 -1 1 -24 1 -1 1 -21 2 -33 7 -32 10 -18 8zM4 76l0 9 4 0 22 -9 32 -9 41 -8 25 -2 1 -1 13 0 1 -1 56 1 1 1 9 0 1 1 7 0 1 1 22 2 16 3 41 12 26 11 21 11 28 18 18 14 32 31 12 14 22 31 21 39 10 24 8 25 6 25 0 5 3 13 0 7 1 1 1 21 1 1 0 40 -1 1 0 12 -1 1 -2 23 -7 34 -11 35 -13 31 -8 14 0 4 8 0 0 -4 13 -27 12 -33 11 -45 3 -27 1 -1 1 -32 1 -1 -2 -45 -1 -1 0 -8 -1 -1 -2 -18 -6 -27 -8 -26 -9 -23 -11 -23 -12 -21 -15 -22 -17 -21 -35 -34 -21 -16 -27 -17 -21 -11 -31 -13 -28 -9 -30 -7 -25 -3 -1 -1 -22 -1 -1 -1 -46 0 -1 1 -22 1 -1 1 -25 3 -27 6 -35 11 -23 10zM514 22l0 3 16 16 11 13 3 0 0 -13 -3 0 -15 -16 0 -3zM463 22l0 3 16 13 35 35 27 34 3 0 0 -13 -3 0 -22 -27 -43 -42 0 -3zM409 22l1 4 10 6 27 21 36 34 21 24 13 17 17 25 7 13 3 0 0 -16 -4 -1 -19 -29 -27 -33 -38 -37 -32 -24 -1 -4zM342 22l0 3 28 14 18 11 24 17 25 21 26 26 21 25 23 33 10 17 16 32 8 21 3 0 0 -20 -4 -1 -14 -31 -17 -29 -22 -31 -15 -18 -33 -33 -23 -19 -18 -13 -24 -15 -12 -6 -1 -4zM228 22l0 3 12 1 25 5 4 2 14 3 28 10 36 17 34 21 33 26 30 30 24 30 14 21 12 21 13 27 8 20 9 28 9 42 2 23 1 1 0 12 1 1 0 44 -1 1 0 13 -1 1 0 8 -1 1 0 7 -1 1 -2 18 -8 34 -10 31 -9 22 -6 11 0 4 6 0 0 -3 4 -7 11 -27 9 -28 8 -34 0 -5 3 -13 0 -7 1 -1 0 -8 4 -1 0 -79 -4 -1 0 -8 -1 -1 -2 -19 -5 -20 0 -4 -7 -22 0 -3 -10 -28 -20 -42 -22 -35 -30 -37 -29 -28 -28 -22 -18 -12 -30 -17 -36 -16 -25 -8 -1 -4zM4 48l3 0 6 -3 31 -10 12 -2 13 -4 9 -1 5 -2 11 -1 0 -3 -53 0 -1 4 -20 6 -11 5 -5 0z"/>
<path fill="#c79e44" fill-rule="evenodd" d="M46 515l19 10 22 8 20 5 19 2 1 1 11 0 1 1 42 -1 1 -1 17 -2 26 -8 -17 4 -30 3 -1 1 -13 0 -1 1 -28 -1 -1 -1 -14 -1 -22 -5 -19 -7zM57 479l24 17 24 13 15 6 27 6 24 0 1 -1 16 -2 15 -5 14 -7 12 -8 -9 0 -10 5 -8 2 -11 0 -5 2 -6 0 -4 -4 -10 2 -17 0 -24 -5 -13 -5 -9 -5 -8 2 -14 -6 -7 -5 -10 -2zM108 319l-1 9 3 -2 17 -5 15 -1 1 -1 14 0 1 1 13 1 11 3 3 2 2 0 4 -4 7 -1 7 2 12 7 12 14 6 13 3 13 0 8 1 1 -1 30 -6 27 -2 4 4 1 4 -11 4 -19 1 -36 -1 -1 -1 -11 -4 -13 -6 -11 -11 -12 -14 -8 -18 -4 -18 0 -1 1 -10 0 -1 1 -46 1z"/>
</g>

<defs>
<radialGradient id="blobg" gradientUnits="userSpaceOnUse" cx="0" cy="0" r="1" gradientTransform="translate(157 392) scale(58 76)">
<stop offset="0" stop-color="#efe4c6"/>
<stop offset="0.45" stop-color="#e8d8b0"/>
<stop offset="0.7" stop-color="#dcc08a" stop-opacity="0.9"/>
<stop offset="0.85" stop-color="#d0aa62" stop-opacity="0.5"/>
<stop offset="1" stop-color="#c89a48" stop-opacity="0"/>
</radialGradient>
<radialGradient id="coreg" gradientUnits="userSpaceOnUse" cx="0" cy="0" r="1" gradientTransform="translate(161 396) rotate(-10) scale(24 34)">
<stop offset="0" stop-color="#ffffff"/>
<stop offset="0.7" stop-color="#ffffff"/>
<stop offset="0.88" stop-color="#fbf6e6" stop-opacity="0.9"/>
<stop offset="1" stop-color="#f3e8cc" stop-opacity="0"/>
</radialGradient>
<filter id="pitblur" x="-50%" y="-50%" width="200%" height="200%"><feGaussianBlur stdDeviation="1.2"/></filter>
</defs>
<ellipse cx="157" cy="392" rx="58" ry="76" fill="url(#blobg)"/>
<ellipse cx="155" cy="393" rx="47" ry="58" fill="none" stroke="#b98a3c" stroke-width="3" opacity="0.6" filter="url(#pitblur)"/>
<ellipse cx="161" cy="396" rx="24" ry="34" transform="rotate(-10 161 396)" fill="url(#coreg)"/>
<g fill="#5a1204" filter="url(#pitblur)" opacity="0.9">
<ellipse cx="210" cy="402" rx="5" ry="8" transform="rotate(0 210 402)"/><ellipse cx="207" cy="380" rx="4" ry="4" transform="rotate(0 207 380)"/><ellipse cx="200" cy="437" rx="6" ry="4" transform="rotate(30 200 437)"/><ellipse cx="79" cy="397" rx="5" ry="4" transform="rotate(0 79 397)"/><ellipse cx="82" cy="420" rx="5" ry="4" transform="rotate(0 82 420)"/><ellipse cx="93" cy="437" rx="6" ry="4" transform="rotate(40 93 437)"/><ellipse cx="102" cy="446" rx="5" ry="4" transform="rotate(40 102 446)"/><ellipse cx="146" cy="309" rx="10" ry="5" transform="rotate(0 146 309)"/><ellipse cx="115" cy="483" rx="7" ry="4" transform="rotate(0 115 483)"/><ellipse cx="140" cy="490" rx="8" ry="4" transform="rotate(0 140 490)"/><ellipse cx="165" cy="492" rx="6" ry="3" transform="rotate(0 165 492)"/><ellipse cx="105" cy="512" rx="8" ry="5" transform="rotate(10 105 512)"/><ellipse cx="135" cy="522" rx="10" ry="5" transform="rotate(0 135 522)"/><ellipse cx="170" cy="526" rx="8" ry="4" transform="rotate(0 170 526)"/><ellipse cx="241" cy="431" rx="5" ry="4" transform="rotate(60 241 431)"/><ellipse cx="233" cy="444" rx="5" ry="4" transform="rotate(50 233 444)"/><ellipse cx="218" cy="470" rx="6" ry="4" transform="rotate(30 218 470)"/><ellipse cx="205" cy="477" rx="5" ry="4" transform="rotate(20 205 477)"/><ellipse cx="269" cy="450" rx="4" ry="4" transform="rotate(0 269 450)"/><ellipse cx="246" cy="487" rx="6" ry="4" transform="rotate(40 246 487)"/><ellipse cx="222" cy="504" rx="6" ry="4" transform="rotate(30 222 504)"/>
</g>


<g fill="none" stroke="#ffffff" stroke-width="1">
<path d="M31 393.5H525"/>
<path d="M62.2 473.2L532 37"/>
<circle cx="28.5" cy="393.5" r="2.5" stroke-width="1.2"/>
<circle cx="60.5" cy="475.5" r="2.5" stroke-width="1.2"/>
</g>
<g stroke-width="1.4" fill="none" shape-rendering="crispEdges">
<path d="M148 393.5h3.5M155 393.5h3M153.5 388v3.5M153.5 395v3" stroke="#0000ff"/>
<path d="M276 393.5h3.5M283 393.5h3M281.5 388v3.5M281.5 395v3" stroke="#0000ff"/>
<path d="M162 375.5h3.5M169 375.5h3M167.5 370v3.5M167.5 377v3" stroke="#ff0000"/>
<path d="M267 277.5h3.5M274 277.5h3M272.5 272v3.5M272.5 279v3" stroke="#ff0000"/>
</g>

</svg>
<!-- colorbar -->
<defs><linearGradient id="cbar" x1="0" y1="0" x2="0" y2="1">
<stop offset="0" stop-color="#fdfdf9"/><stop offset="0.08" stop-color="#efe7d0"/>
<stop offset="0.2" stop-color="#cdb27a"/><stop offset="0.32" stop-color="#a87c12"/>
<stop offset="0.45" stop-color="#8a4a08"/><stop offset="0.58" stop-color="#5e0a02"/>
<stop offset="0.72" stop-color="#2e0702"/><stop offset="0.88" stop-color="#050100"/><stop offset="1" stop-color="#000"/>
</linearGradient></defs>
<rect x="573.5" y="55.5" width="19" height="476" fill="url(#cbar)" stroke="#808080"/>
<text x="594.5" y="47" text-anchor="end" textLength="44.5" lengthAdjust="spacingAndGlyphs">500.0 nm</text>
<text x="595" y="552" text-anchor="end" textLength="48.5" lengthAdjust="spacingAndGlyphs">-500.0 nm</text>
<path d="M7.5 576V568.5H541.5V576" fill="none" stroke="#000" stroke-width="1"/>
<text x="7" y="587">0.0</text>
<text x="542" y="587" text-anchor="end" textLength="37.5" lengthAdjust="spacingAndGlyphs">10.0 μm</text>
<text x="262" y="589" text-anchor="middle" style="font-weight:bold;font-size:13px">1: Height</text>

<!-- right: section -->
<text x="611" y="12">Section</text>
<rect x="610.5" y="19.5" width="747" height="307" fill="#fff" stroke="#6e6e6e"/>
<g stroke="#e6e6e6" stroke-width="1" fill="none" shape-rendering="crispEdges"><path d="M671 32.5H1342"/><path d="M671 60.5H1342"/><path d="M671 87.5H1342"/><path d="M671 115.5H1342"/><path d="M671 143.5H1342"/><path d="M671 171.5H1342"/><path d="M671 199.5H1342"/><path d="M671 226.5H1342"/><path d="M671 254.5H1342"/><path d="M671 282.5H1342"/><path d="M671 310.5H1342"/><path d="M767.5 32V310"/><path d="M863.5 32V310"/><path d="M959.5 32V310"/><path d="M1055.5 32V310"/><path d="M1151.5 32V310"/><path d="M1246.5 32V310"/><path d="M671.5 32V310"/><path d="M1342.5 32V310"/></g>
<g><text x="670.5" y="35.7" text-anchor="end">700</text><text x="670.5" y="63.5" text-anchor="end">600</text><text x="670.5" y="91.2" text-anchor="end">500</text><text x="670.5" y="119.0" text-anchor="end">400</text><text x="670.5" y="146.8" text-anchor="end">300</text><text x="670.5" y="174.6" text-anchor="end">200</text><text x="670.5" y="202.3" text-anchor="end">100</text><text x="670.5" y="230.1" text-anchor="end">0</text><text x="670.5" y="257.9" text-anchor="end">-100</text><text x="670.5" y="285.6" text-anchor="end">-200</text><text x="666" y="317" text-anchor="end" style="font-size:12px">nm</text><text x="767.2" y="322" text-anchor="middle">2</text><text x="863.0" y="322" text-anchor="middle">4</text><text x="958.9" y="322" text-anchor="middle">6</text><text x="1054.7" y="322" text-anchor="middle">8</text><text x="1150.6" y="322" text-anchor="middle">10</text><text x="1246.5" y="322" text-anchor="middle">12</text><text x="1345" y="324" text-anchor="end">μm</text></g>
<g shape-rendering="crispEdges"><path d="M784.5 32V310" stroke="#0000ff" stroke-width="1" stroke-dasharray="9 3 3 3 3 3" fill="none"/><path d="M802.5 32V310" stroke="#ff0000" stroke-width="1" stroke-dasharray="9 3 3 3 3 3" fill="none"/><path d="M898.5 32V310" stroke="#0000ff" stroke-width="1" stroke-dasharray="9 3 3 3 3 3" fill="none"/><path d="M932.5 32V310" stroke="#ff0000" stroke-width="1" stroke-dasharray="9 3 3 3 3 3" fill="none"/></g>
<path d="M671.7 237.0 L673.7 229.0 L675.8 220.2 L677.8 216.2 L679.8 210.7 L681.3 215.5 L682.9 227.4 L684.6 234.6 L687.0 227.4 L688.9 231.0 L690.8 241.8 L692.3 234.3 L693.7 225.0 L696.1 208.3 L698.5 201.1 L699.7 196.3 L701.4 203.5 L703.3 196.3 L705.2 179.6 L706.9 174.3 L708.1 179.6 L710.0 176.0 L711.7 184.4 L714.0 220.2 L716.4 248.9 L718.8 269.3 L720.5 268.1 L722.4 241.8 L724.8 222.6 L726.2 213.2 L727.7 201.1 L729.2 197.6 L730.8 192.7 L732.6 188.0 L734.4 180.8 L736.8 183.2 L739.2 174.8 L741.6 158.8 L742.8 150.4 L744.4 158.8 L746.3 155.2 L748.3 161.1 L749.9 174.8 L751.5 167.2 L753.1 162.4 L754.7 156.4 L756.5 154.1 L758.3 149.2 L760.7 139.6 L763.1 122.9 L765.5 104.9 L767.9 106.1 L769.8 108.5 L772.2 98.9 L774.6 84.6 L776.2 79.8 L778.6 76.2 L780.4 76.1 L782.2 75.0 L784.6 72.6 L787.0 73.8 L789.4 69.0 L791.8 75.0 L794.2 70.2 L796.6 64.3 L797.8 75.0 L800.2 77.4 L801.8 57.1 L803.3 84.6 L805.0 91.8 L807.3 113.3 L809.7 144.4 L810.9 156.4 L813.3 146.8 L815.0 127.7 L816.8 121.3 L818.5 111.3 L820.3 104.9 L821.7 111.6 L823.1 117.7 L824.6 125.3 L827.0 132.4 L828.9 158.8 L830.5 170.6 L832.1 182.4 L833.7 193.9 L835.1 173.7 L836.5 156.4 L838.1 149.1 L839.7 142.9 L841.3 137.2 L843.7 146.8 L845.6 142.0 L847.1 154.0 L848.5 163.5 L850.1 180.8 L851.7 195.5 L853.3 213.1 L855.7 222.6 L857.6 241.8 L859.3 282.4 L861.7 292.0 L864.0 287.2 L866.4 282.4 L868.8 289.6 L870.6 278.5 L872.4 265.7 L874.2 250.3 L876.0 237.0 L877.8 215.8 L879.6 193.9 L881.1 181.9 L882.6 170.7 L884.1 162.4 L885.6 150.4 L888.0 152.8 L889.6 177.6 L891.2 203.3 L892.8 229.8 L894.5 249.2 L896.3 265.7 L898.7 280.0 L900.5 265.6 L902.3 248.9 L904.1 232.8 L905.9 217.8 L907.7 201.3 L909.5 182.0 L911.1 170.4 L912.7 159.1 L914.3 146.8 L916.1 151.9 L917.9 158.8 L919.5 179.8 L921.1 198.7 L922.7 217.8 L924.6 270.5 L926.2 277.7 L928.6 275.3 L930.4 279.1 L932.2 280.0 L934.6 260.9 L936.2 247.7 L937.8 231.6 L939.4 217.8 L941.0 204.7 L942.6 191.3 L944.2 179.6 L946.0 168.1 L947.8 158.8 L949.4 169.2 L951.0 181.6 L952.6 193.9 L953.8 232.2 L956.1 270.5 L958.5 277.7 L960.1 274.0 L961.7 268.2 L963.3 265.7 L965.0 270.0 L966.4 259.6 L967.9 247.6 L969.3 236.5 L970.8 227.0 L972.2 215.0 L973.6 203.6 L975.1 193.1 L976.5 182.8 L978.0 169.9 L979.4 160.2 L980.8 183.7 L982.3 203.0 L983.7 227.3 L985.2 249.7 L986.6 270.8 L988.0 269.2 L989.5 271.3 L990.9 269.8 L992.4 270.2 L993.8 268.3 L995.3 268.2 L996.7 269.4 L998.1 256.3 L999.6 246.5 L1001.0 232.1 L1002.4 221.6 L1003.9 210.0 L1005.3 197.9 L1006.7 184.0 L1008.2 171.9 L1009.6 160.2 L1011.0 179.5 L1012.5 199.5 L1013.9 216.7 L1015.4 237.9 L1016.8 256.4 L1018.2 258.4 L1019.7 259.6 L1021.1 258.2 L1022.5 262.0 L1024.0 260.5 L1025.4 262.4 L1026.9 264.3 L1028.3 265.0 L1029.7 252.3 L1031.2 236.6 L1032.6 224.4 L1034.0 209.4 L1035.4 194.7 L1036.9 180.8 L1038.3 167.4 L1039.7 184.2 L1041.2 201.7 L1042.6 219.7 L1044.1 239.2 L1045.5 256.4 L1046.9 258.3 L1048.4 256.1 L1049.8 256.1 L1051.2 259.3 L1052.7 258.3 L1054.1 258.3 L1055.6 258.1 L1057.0 259.3 L1058.5 247.9 L1060.0 237.0 L1061.5 224.2 L1063.0 212.4 L1064.5 199.7 L1066.0 190.6 L1067.5 176.3 L1069.0 166.0 L1070.7 187.2 L1072.3 209.4 L1074.0 228.4 L1075.7 250.7 L1077.1 252.2 L1078.6 253.6 L1080.0 253.5 L1081.4 254.8 L1082.9 253.5 L1084.3 255.3 L1085.7 255.2 L1087.2 258.1 L1088.6 257.9 L1090.0 247.4 L1091.5 237.9 L1092.9 229.6 L1094.4 219.3 L1095.8 209.7 L1097.2 198.2 L1098.7 188.4 L1100.1 179.2 L1101.6 168.6 L1103.0 158.7 L1104.5 201.1 L1106.0 244.8 L1107.5 245.2 L1109.0 245.2 L1110.5 246.6 L1112.0 249.1 L1113.5 249.7 L1115.0 249.5 L1116.5 249.8 L1118.0 250.5 L1119.4 235.7 L1120.9 220.6 L1122.3 206.7 L1123.7 193.9 L1125.1 179.8 L1126.6 163.9 L1128.0 150.0 L1129.4 174.6 L1130.8 198.2 L1132.3 221.7 L1133.7 244.8 L1135.1 245.3 L1136.6 245.6 L1138.0 244.4 L1139.4 245.4 L1140.8 244.1 L1142.3 244.8 L1143.7 245.6 L1145.1 245.4 L1146.6 244.2 L1148.0 244.8 L1149.6 231.6 L1151.2 216.1 L1152.8 201.3 L1154.4 185.0 L1156.0 172.0 L1157.6 157.3 L1159.2 174.8 L1160.8 194.4 L1162.3 212.0 L1163.9 230.4 L1165.3 231.9 L1166.7 232.0 L1168.1 233.0 L1169.5 232.2 L1171.0 233.6 L1172.4 234.5 L1173.8 235.3 L1175.2 234.4 L1176.6 236.5 L1178.0 236.0 L1179.5 224.0 L1180.9 210.3 L1182.4 198.1 L1183.9 184.9 L1185.3 170.5 L1186.8 157.3 L1188.2 175.0 L1189.7 191.4 L1191.1 211.0 L1192.6 227.6 L1194.0 229.8 L1195.5 229.2 L1196.9 230.7 L1198.4 231.6 L1199.8 232.5 L1201.2 231.7 L1202.7 234.3 L1204.1 234.6 L1205.6 235.7 L1207.0 236.0 L1208.4 223.6 L1209.8 212.0 L1211.2 200.3 L1212.7 187.7 L1214.1 175.8 L1215.5 163.0 L1217.0 163.7 L1218.4 167.3 L1219.8 184.4 L1221.3 203.5 L1222.7 221.8 L1224.1 223.1 L1225.6 222.7 L1227.0 224.9 L1228.4 225.6 L1229.8 224.7 L1231.3 226.9 L1232.7 227.0 L1234.1 227.3 L1235.6 228.4 L1237.0 230.4 L1238.4 217.0 L1239.9 203.6 L1241.3 190.8 L1242.7 177.4 L1244.2 165.8 L1245.6 153.0 L1247.0 165.1 L1248.5 178.3 L1250.0 190.8 L1251.4 203.0" fill="none" stroke="#ff0000" stroke-width="1.1"/>
<path d="M671.7 287.2 L673.1 280.5 L674.6 275.3 L676.4 258.6 L678.2 241.8 L679.7 229.4 L681.3 217.8 L682.7 211.0 L684.1 203.5 L686.5 215.5 L688.9 207.1 L690.4 214.0 L691.8 220.2 L693.2 213.1 L695.6 221.4 L697.1 214.7 L698.5 210.7 L700.9 205.9 L703.3 202.3 L705.7 199.9 L708.1 193.9 L710.0 184.4 L712.1 176.7 L714.0 192.7 L716.4 187.9 L718.8 205.9 L720.6 218.2 L722.4 233.4 L724.8 221.4 L726.2 224.2 L727.7 225.0 L729.2 214.7 L730.8 205.9 L732.6 199.1 L734.4 193.9 L736.0 189.8 L737.6 182.7 L739.2 177.2 L741.1 170.0 L742.8 161.1 L744.3 159.8 L745.9 156.4 L747.5 158.8 L749.9 155.9 L752.3 160.0 L754.7 151.6 L756.5 146.7 L758.3 142.0 L760.1 137.6 L761.9 132.4 L763.6 120.5 L765.5 115.7 L767.9 113.3 L770.3 108.5 L772.7 96.6 L775.0 84.6 L777.4 78.6 L779.8 75.0 L781.7 65.5 L783.4 70.2 L785.1 64.3 L787.0 72.6 L788.2 65.5 L789.9 70.2 L791.8 66.7 L793.7 61.9 L795.4 69.0 L797.1 59.5 L798.5 57.1 L799.7 67.8 L801.4 55.9 L803.3 59.5 L805.0 67.8 L806.1 75.0 L807.8 79.8 L808.5 83.4 L809.7 103.7 L810.9 120.5 L812.1 139.6 L813.3 163.5 L815.0 156.4 L816.7 148.1 L818.3 142.4 L820.0 135.9 L821.7 127.7 L823.4 120.5 L825.0 122.9 L827.0 144.4 L828.4 172.3 L829.8 198.7 L831.7 232.2 L834.1 271.7 L835.9 262.0 L837.7 251.3 L839.5 235.7 L841.3 222.6 L843.1 209.1 L844.9 193.9 L846.3 184.3 L847.8 173.5 L849.2 162.8 L850.6 155.4 L852.1 144.4 L854.5 142.0 L856.9 128.9 L859.3 144.4 L861.7 145.6 L863.4 172.1 L865.2 198.7 L867.6 205.9 L869.5 221.4 L871.2 213.1 L873.6 227.4 L876.0 229.8 L878.4 208.3 L880.2 194.6 L882.0 179.6 L883.8 165.5 L885.6 149.2 L887.4 155.8 L889.2 161.1 L891.1 190.8 L893.0 217.8 L894.4 239.4 L896.3 260.9 L898.3 284.8 L898.7 308.8 L899.9 275.3 L901.7 258.2 L903.5 241.8 L905.3 230.7 L907.1 217.8 L908.9 208.1 L910.7 198.7 L912.3 192.0 L913.9 183.9 L915.5 174.8 L917.1 169.8 L918.7 166.2 L920.3 163.5 L922.1 201.8 L923.9 241.8 L926.2 280.0 L928.6 282.4 L931.0 292.0 L933.4 275.3 L935.2 259.9 L937.0 241.8 L938.8 226.0 L940.6 210.7 L942.2 201.5 L943.8 190.9 L945.4 182.0 L947.8 174.8 L950.2 189.1 L952.6 184.4 L955.0 256.1 L956.7 269.3 L958.5 282.4 L960.2 284.5 L961.8 286.8 L963.4 289.9 L965.0 292.0 L966.7 290.9 L968.3 290.5 L970.0 288.0 L971.5 274.5 L973.1 261.3 L974.6 247.1 L976.1 233.5 L977.7 218.5 L979.2 203.0 L980.8 191.1 L982.3 176.0 L984.1 184.4 L986.0 190.0 L988.0 231.2 L990.0 270.0 L991.7 275.2 L993.5 280.6 L995.2 285.0 L996.8 282.5 L998.4 282.7 L1000.0 280.0 L1001.6 267.0 L1003.1 253.0 L1004.7 239.1 L1006.2 228.3 L1007.8 215.5 L1009.4 199.6 L1010.9 188.6 L1012.5 174.5 L1014.2 179.5 L1016.0 185.0 L1017.5 224.0 L1019.0 265.0 L1020.7 270.6 L1022.3 278.3 L1024.0 283.7 L1026.0 282.0 L1028.0 278.0 L1029.5 264.1 L1031.0 253.2 L1032.4 238.9 L1033.9 228.4 L1035.4 214.6 L1036.8 203.7 L1038.3 191.4 L1039.8 177.4 L1041.4 186.2 L1043.0 195.0 L1045.0 233.0 L1047.0 268.0 L1048.4 270.0 L1049.8 271.9 L1051.2 276.0 L1052.6 276.9 L1054.0 280.9 L1056.0 277.5 L1058.0 276.0 L1059.5 265.1 L1061.0 255.1 L1062.5 243.1 L1064.0 232.1 L1065.4 223.9 L1066.9 211.6 L1068.4 202.9 L1069.9 192.1 L1071.4 180.3 L1073.2 187.3 L1075.0 195.0 L1077.0 228.4 L1079.0 262.0 L1080.7 265.3 L1082.3 268.9 L1084.0 272.0 L1085.7 275.0 L1087.1 273.5 L1088.6 272.0 L1090.0 270.0 L1091.5 257.9 L1093.1 243.2 L1094.6 229.5 L1096.1 216.9 L1097.6 202.1 L1099.2 188.8 L1100.7 176.0 L1102.1 185.1 L1103.6 191.4 L1105.0 199.0 L1106.5 233.0 L1108.2 247.6 L1110.0 262.0 L1111.6 259.0 L1113.2 258.7 L1114.9 257.7 L1116.5 256.0" fill="none" stroke="#0000ff" stroke-width="1.1"/>

<text x="611" y="348" textLength="113" lengthAdjust="spacingAndGlyphs">Spectral Period 0.00 μm</text>
<text x="784" y="348" textLength="137.5" lengthAdjust="spacingAndGlyphs">Spectral Frequency 0.00 /μm</text>
<text x="611" y="366" textLength="152.5" lengthAdjust="spacingAndGlyphs">Spectral RMS Amplitude 136 nm</text>
<text x="784" y="366" textLength="110.5" lengthAdjust="spacingAndGlyphs">Temporal Freq: 0.00 Hz</text>

<rect x="610.5" y="373.5" width="747" height="182" fill="#fff" stroke="#6e6e6e"/>
<g stroke="#e6e6e6" stroke-width="1" fill="none" shape-rendering="crispEdges"><path d="M671 387.5H1342"/><path d="M671 438.5H1342"/><path d="M671 489.5H1342"/><path d="M671 541.5H1342"/><path d="M738.5 386V541"/><path d="M806.5 386V541"/><path d="M873.5 386V541"/><path d="M940.5 386V541"/><path d="M1008.5 386V541"/><path d="M1075.5 386V541"/><path d="M1142.5 386V541"/><path d="M1209.5 386V541"/><path d="M1277.5 386V541"/><path d="M671.5 386V541"/><path d="M1342.5 386V541"/></g>
<g><text x="670" y="390.7" text-anchor="end">150</text><text x="670" y="442.0" text-anchor="end">100</text><text x="670" y="493.3" text-anchor="end">50</text><text x="666" y="547" text-anchor="end" style="font-size:12px">nm</text><text x="738.3" y="553" text-anchor="middle">2</text><text x="805.6" y="553" text-anchor="middle">4</text><text x="872.9" y="553" text-anchor="middle">6</text><text x="940.2" y="553" text-anchor="middle">8</text><text x="1007.5" y="553" text-anchor="middle">10</text><text x="1074.8" y="553" text-anchor="middle">12</text><text x="1142.1" y="553" text-anchor="middle">14</text><text x="1209.4" y="553" text-anchor="middle">16</text><text x="1276.7" y="553" text-anchor="middle">18</text><text x="1349" y="554" text-anchor="end">/μm</text></g>
<path d="M671.5 541V397M671.5 392V386M674.5 541V450.7M677.5 541V469.2M679.5 541V481.5M682.5 541V496.9M685.5 541V503.0M688.5 541V527.7M690.5 541V536.9M693.5 541V528.7M696.5 541V527.1M699.5 541V521.8M701.5 541V527.1M704.5 541V524.1M707.5 541V521.8M710.5 541V529.0M715.5 541V516.6M718.5 541V501.2M721.5 541V510.6M724.5 541V456.9M726.5 541V500.2M729.5 541V520.0M732.5 541V530.1M735.5 541V538.3M737.5 541V538.3M740.5 541V524.1M743.5 541V528.2M746.5 541V534.1M748.5 541V534.1M751.5 541V533.1M754.5 541V539.1M757.5 541V535.4M759.5 541V536.5M762.5 541V534.1M765.5 541V538.3M768.5 541V539.1M771.5 541V536.1M773.5 541V531.2M776.5 541V535.0M779.5 541V520.0M782.5 541V530.1M784.5 541V537.1M787.5 541V537.1M790.5 541V539.8M793.5 541V537.1M795.5 541V538.3M798.5 541V535.0M801.5 541V538.3M804.5 541V540.1M806.5 541V538.3M809.5 541V538.3M812.5 541V539.8M815.5 541V540.1M818.5 541V539.7M820.5 541V537.1M823.5 541V539.8M826.5 541V535.4M829.5 541V535.4M831.5 541V537.1M834.5 541V534.1M837.5 541V537.1M840.5 541V540.1M842.5 541V540.1M845.5 541V538.3M848.5 541V538.3M851.5 541V537.1M853.5 541V539.8M856.5 541V539.8M859.5 541V538.3M862.5 541V540.0M865.5 541V540.0M867.5 541V536.9M870.5 541V540.0M873.5 541V537.9M878.5 541V540.0M881.5 541V538.9M884.5 541V538.9M889.5 541V540.0M895.5 541V538.9M898.5 541V538.9M903.5 541V536.9M906.5 541V538.9M909.5 541V538.9M917.5 541V540.0M931.5 541V540.0M934.5 541V540.0M936.5 541V538.9M939.5 541V540.0M942.5 541V538.9M945.5 541V540.0M948.5 541V538.9M950.5 541V540.0M953.5 541V540.0M956.5 541V537.9M959.5 541V538.9M961.5 541V540.0M967.5 541V540.0M972.5 541V538.9M975.5 541V540.0M978.5 541V538.9M981.5 541V540.0M983.5 541V535.9M992.5 541V536.9M995.5 541V540.0M997.5 541V538.9M1000.5 541V540.0M1003.5 541V540.0M1008.5 541V538.9M1011.5 541V540.0M1014.5 541V540.0M1019.5 541V540.0M1022.5 541V537.9M1033.5 541V538.9M1039.5 541V540.0M1042.5 541V540.0M1047.5 541V538.9M1053.5 541V538.9M1058.5 541V540.0M1064.5 541V540.0M1066.5 541V535.9M1069.5 541V540.0M1072.5 541V537.9M1077.5 541V535.9M1080.5 541V538.9M1086.5 541V537.9M1089.5 541V540.0M1094.5 541V538.9M1097.5 541V538.9M1100.5 541V540.0M1108.5 541V538.9M1113.5 541V540.0M1116.5 541V538.9M1122.5 541V540.0M1124.5 541V538.9M1130.5 541V540.0M1133.5 541V538.9M1136.5 541V540.0M1141.5 541V538.9M1144.5 541V538.9M1149.5 541V538.9M1152.5 541V540.0M1155.5 541V538.9M1158.5 541V540.0M1160.5 541V540.0M1171.5 541V540.0M1174.5 541V540.0M1177.5 541V538.9M1180.5 541V540.0M1183.5 541V540.0M1185.5 541V536.9M1188.5 541V540.0M1194.5 541V538.9M1202.5 541V540.0M1205.5 541V535.9M1213.5 541V535.9M1218.5 541V540.0M1221.5 541V540.0M1230.5 541V540.0M1232.5 541V540.0M1238.5 541V540.0M1241.5 541V536.9M1243.5 541V538.9M1246.5 541V538.9M1249.5 541V540.0M1260.5 541V535.9M1263.5 541V540.0M1268.5 541V540.0M1277.5 541V540.0M1285.5 541V540.0M1288.5 541V540.0M1293.5 541V535.9M1296.5 541V538.9" stroke="#ff0000" stroke-width="1" fill="none" shape-rendering="crispEdges"/>
</svg>
</body></html>
